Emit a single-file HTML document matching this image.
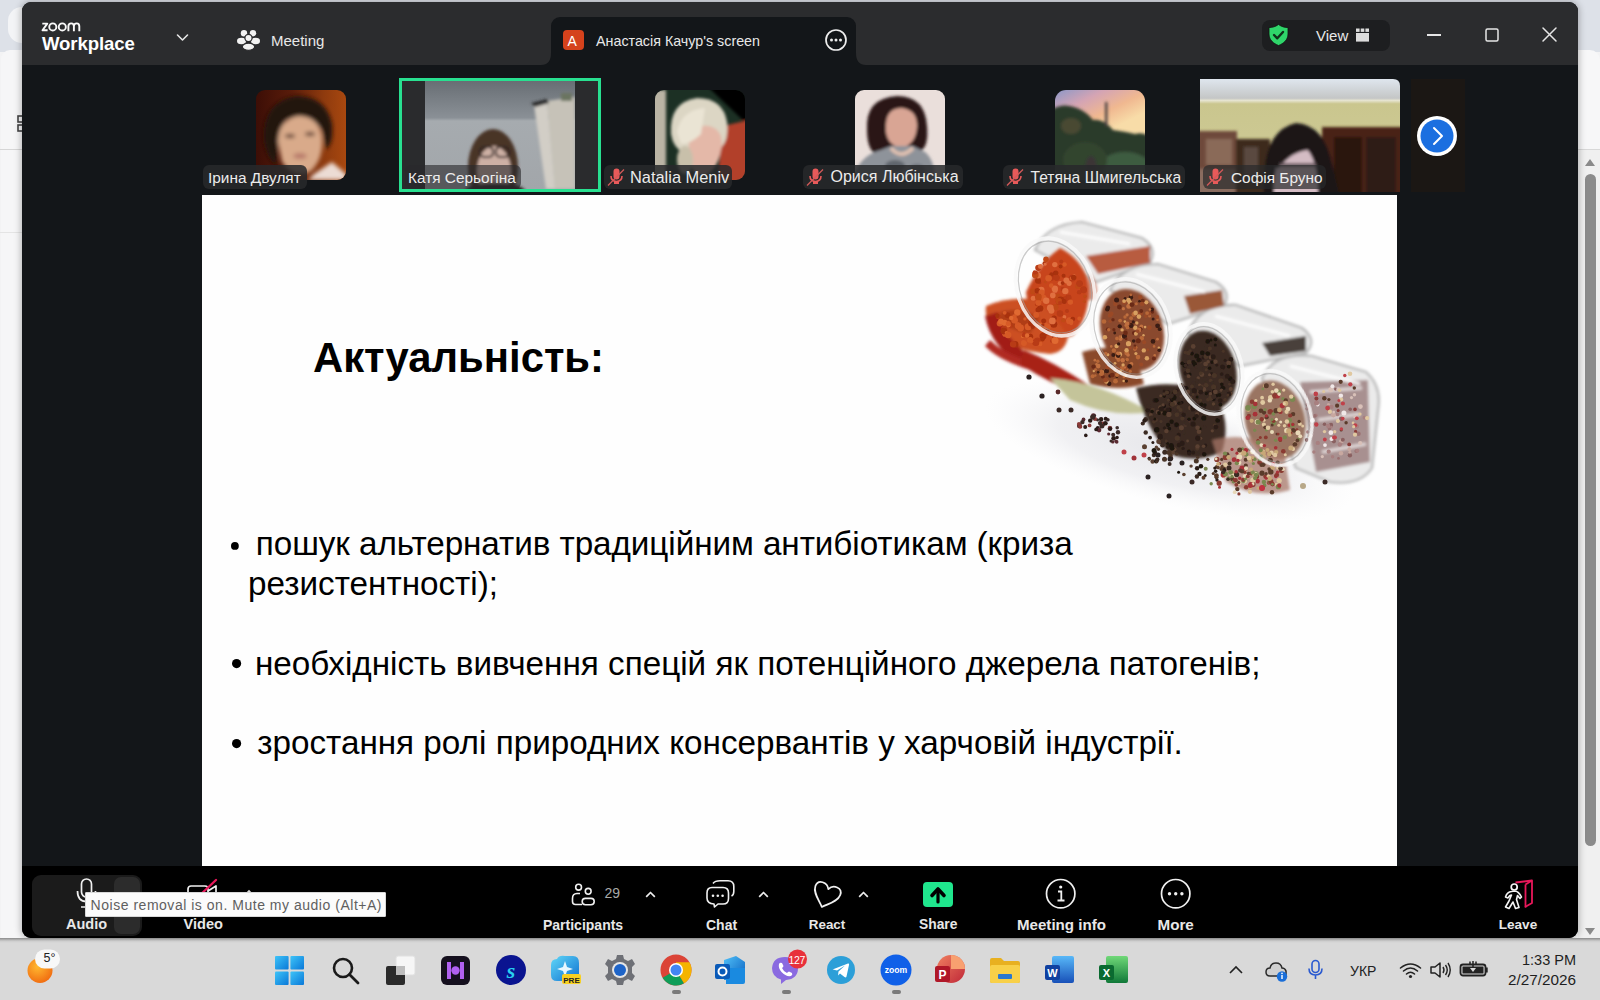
<!DOCTYPE html>
<html><head><meta charset="utf-8">
<style>
*{margin:0;padding:0;box-sizing:border-box}
html,body{width:1600px;height:1000px;overflow:hidden;background:#f3f3f4;font-family:"Liberation Sans",sans-serif}
.a{position:absolute}
.t{white-space:nowrap}
svg{overflow:visible}
</style></head><body>
<div class="a" style="left:0px;top:0px;width:1600px;height:52px;background:#dde1e8;border-radius:0px;"></div>
<div class="a" style="left:8px;top:7px;width:30px;height:36px;background:#f3f4f6;border-radius:14px;"></div>
<div class="a" style="left:1px;top:50px;width:40px;height:890px;background:#f6f6f7;border-radius:0px;border-radius:9px 10px 0 0"></div>
<div class="a" style="left:1560px;top:50px;width:40px;height:890px;background:#f7f7f8;border-radius:10px;"></div>
<div class="a" style="left:0px;top:149px;width:22px;height:1px;background:#d6d6d6;border-radius:0px;"></div>
<div class="a" style="left:0px;top:232px;width:22px;height:1px;background:#e4e4e4;border-radius:0px;"></div>
<div class="a" style="left:1578px;top:149px;width:22px;height:1px;background:#d8d8d8;border-radius:0px;"></div>
<div class="a" style="left:1578px;top:150px;width:22px;height:790px;background:#f0f0f0;border-radius:0px;"></div>
<svg class="a" style="left:15.5px;top:114px;" width="10" height="20" viewBox="0 0 10 20"><rect x="2" y="2" width="6" height="6" fill="none" stroke="#444" stroke-width="1.6"/><rect x="2" y="11" width="6" height="6" fill="none" stroke="#444" stroke-width="1.6"/></svg>
<svg class="a" style="left:1583px;top:156px;" width="14" height="12" viewBox="0 0 14 12"><path d="M2 10 L7 3 L12 10 Z" fill="#8a8a8a"/></svg>
<div class="a" style="left:1585px;top:174px;width:11px;height:672px;background:#8b8b8b;border-radius:6px;"></div>
<svg class="a" style="left:1583px;top:926px;" width="14" height="12" viewBox="0 0 14 12"><path d="M2 2 L7 9 L12 2 Z" fill="#8a8a8a"/></svg>
<div class="a" style="left:22px;top:2px;width:1556px;height:936px;background:#131619;border-radius:9px;box-shadow:0 0 7px 1px rgba(0,0,0,0.28)"></div>
<div class="a" style="left:22px;top:2px;width:1556px;height:63px;background:#2b2c2e;border-radius:0px;border-radius:9px 9px 0 0"></div>
<div class="a" style="left:22px;top:866px;width:1556px;height:72px;background:#000;border-radius:0px;border-radius:0 0 9px 9px"></div>
<svg class="a" style="left:40px;top:21px;" width="42" height="12" viewBox="0 0 42 12"><g fill="none" stroke="#fafafa" stroke-width="1.9" stroke-linejoin="round"><path d="M2.3 2.6 H7.3 L2.5 9.2 H7.6"/><circle cx="12.8" cy="5.9" r="3.55"/><circle cx="22.3" cy="5.9" r="3.55"/><path d="M28.4 10.2 V5.3 Q28.4 2.4 31.2 2.4 Q33.9 2.4 33.9 5.3 V10.2 M33.9 5.3 Q33.9 2.4 36.7 2.4 Q39.3 2.4 39.3 5.3 V10.2"/></g></svg>
<div class="a t" style="left:42px;top:35.26px;font-size:18.6px;line-height:18.6px;color:#fff;font-weight:700;font-family:'Liberation Sans',sans-serif;letter-spacing:-0.1px">Workplace</div>
<svg class="a" style="left:176px;top:33px;" width="13" height="9" viewBox="0 0 13 9"><path d="M1.5 2 L6.5 7 L11.5 2" fill="none" stroke="#e6e6e6" stroke-width="1.6" stroke-linecap="round" stroke-linejoin="round"/></svg>
<svg class="a" style="left:237px;top:29px;" width="23" height="22" viewBox="0 0 23 22"><circle cx="7" cy="4.2" r="3.2" fill="#f2f2f2"/><circle cx="16" cy="4.2" r="3.2" fill="#f2f2f2"/><ellipse cx="4.5" cy="12" rx="4.5" ry="3.2" fill="#f2f2f2"/><ellipse cx="18.5" cy="12" rx="4.5" ry="3.2" fill="#f2f2f2"/><circle cx="11.5" cy="9" r="3.6" stroke="#2b2b2d" stroke-width="1.2" fill="#f2f2f2"/><ellipse cx="11.5" cy="17.8" rx="6.2" ry="3.6" stroke="#2b2b2d" stroke-width="1.2" fill="#f2f2f2"/></svg>
<div class="a t" style="left:271px;top:33.30px;font-size:15px;line-height:15px;color:#e8e8e8;font-weight:400;font-family:'Liberation Sans',sans-serif;">Meeting</div>
<div class="a" style="left:551px;top:17px;width:305px;height:48px;background:#131619;border-radius:0px;border-radius:9px 9px 0 0"></div>
<svg class="a" style="left:541px;top:53px;" width="10" height="12" viewBox="0 0 10 12"><path d="M0 12 Q10 12 10 0 L10 12 Z" fill="#131619"/></svg>
<svg class="a" style="left:856px;top:53px;" width="10" height="12" viewBox="0 0 10 12"><path d="M10 12 Q0 12 0 0 L0 12 Z" fill="#131619"/></svg>
<div class="a" style="left:563px;top:30px;width:21px;height:20px;background:#d5421c;border-radius:4px;"></div>
<div class="a t" style="left:567.5px;top:33.65px;font-size:14px;line-height:14px;color:#fff;font-weight:400;font-family:'Liberation Sans',sans-serif;">A</div>
<div class="a t" style="left:596px;top:33.90px;font-size:14.3px;line-height:14.3px;color:#e8e8e8;font-weight:400;font-family:'Liberation Sans',sans-serif;">Анастасія Качур's screen</div>
<svg class="a" style="left:824px;top:28px;" width="24" height="24" viewBox="0 0 24 24"><circle cx="12" cy="12" r="10" fill="none" stroke="#eee" stroke-width="1.7"/><circle cx="7.5" cy="12" r="1.5" fill="#eee"/><circle cx="12" cy="12" r="1.5" fill="#eee"/><circle cx="16.5" cy="12" r="1.5" fill="#eee"/></svg>
<div class="a" style="left:1262px;top:20px;width:128px;height:31px;background:#1d1e20;border-radius:8px;"></div>
<svg class="a" style="left:1267px;top:23px;" width="23" height="24" viewBox="0 0 23 24"><path d="M11.5 1.5 C15 4 18 4.5 21 4.5 L21 11 C21 17 16.5 20.5 11.5 22.5 C6.5 20.5 2 17 2 11 L2 4.5 C5 4.5 8 4 11.5 1.5 Z" fill="#2fd56a" stroke="#111" stroke-width="0.8"/><path d="M7 12 L10.3 15.3 L16 9" fill="none" stroke="#10301a" stroke-width="2.4" stroke-linecap="round" stroke-linejoin="round"/></svg>
<div class="a t" style="left:1316px;top:28.30px;font-size:15px;line-height:15px;color:#e8e8e8;font-weight:400;font-family:'Liberation Sans',sans-serif;">View</div>
<svg class="a" style="left:1355px;top:27px;" width="15" height="16" viewBox="0 0 15 16"><rect x="1" y="1.5" width="3.6" height="3.4" fill="#dcdcdc"/><rect x="5.7" y="1.5" width="3.6" height="3.4" fill="#dcdcdc"/><rect x="10.4" y="1.5" width="3.6" height="3.4" fill="#dcdcdc"/><rect x="1" y="6" width="13" height="8.6" fill="#dcdcdc"/></svg>
<div class="a" style="left:1427px;top:34px;width:14px;height:1.6px;background:#e6e6e6;border-radius:0px;"></div>
<svg class="a" style="left:1484px;top:27px;" width="16" height="16" viewBox="0 0 16 16"><rect x="2" y="2" width="12" height="12" rx="1.5" fill="none" stroke="#e6e6e6" stroke-width="1.5"/></svg>
<svg class="a" style="left:1541px;top:26px;" width="17" height="17" viewBox="0 0 17 17"><path d="M2 2 L15 15 M15 2 L2 15" stroke="#e6e6e6" stroke-width="1.5" stroke-linecap="round"/></svg>
<svg class="a" style="left:256px;top:90px;" width="90" height="90" viewBox="0 0 90 90"><defs><clipPath id="c1"><rect width="90" height="90" rx="9"/></clipPath>
<linearGradient id="g1" x1="0" x2="1"><stop offset="0" stop-color="#3c0e06"/><stop offset="0.4" stop-color="#5a1c0a"/><stop offset="0.75" stop-color="#8e3a0e"/><stop offset="1" stop-color="#a8480f"/></linearGradient>
<filter id="bl2" x="-50%" y="-50%" width="200%" height="200%"><feGaussianBlur stdDeviation="2"/></filter></defs>
<g clip-path="url(#c1)"><rect width="90" height="90" fill="url(#g1)"/>
<g filter="url(#bl2)"><path d="M8 50 Q6 12 40 6 Q70 6 76 34 Q78 52 70 60 L66 40 Q50 22 30 30 Q22 44 20 76 Q10 66 8 50 Z" fill="#22140e"/>
<path d="M22 52 Q22 30 42 26 Q62 26 66 46 Q68 70 54 82 Q36 88 26 72 Z" fill="#d9aa8a"/>
<ellipse cx="34" cy="46" rx="5" ry="2.2" fill="#6a4a3a"/><ellipse cx="54" cy="44" rx="5" ry="2.2" fill="#6a4a3a"/>
<ellipse cx="44" cy="66" rx="7" ry="3" fill="#b87a6a"/>
<path d="M58 84 L76 72 L90 84 L90 90 L52 90 Z" fill="#ecdcd4"/></g></g></svg>
<div class="a" style="left:203px;top:165px;width:104px;height:24px;background:rgba(40,41,43,0.86);border-radius:6px;"></div>
<div class="a t" style="left:208px;top:169.76px;font-size:15.4px;line-height:15.4px;color:#ececec;font-weight:400;font-family:'Liberation Sans',sans-serif;">Ірина Двулят</div>
<div class="a" style="left:399px;top:78px;width:202px;height:114px;background:#28e090;border-radius:0px;"></div>
<div class="a" style="left:402px;top:81px;width:196px;height:108px;background:#2a2b2d;border-radius:0px;"></div>
<svg class="a" style="left:425px;top:81px;" width="150" height="108" viewBox="0 0 150 108"><defs><clipPath id="c2"><rect width="150" height="108"/></clipPath>
<linearGradient id="g2" x1="0" y1="0" x2="0" y2="1"><stop offset="0" stop-color="#686e74"/><stop offset="0.34" stop-color="#8a9096"/><stop offset="0.37" stop-color="#a6abaf"/><stop offset="1" stop-color="#a2a6aa"/></linearGradient>
<filter id="bl3" x="-50%" y="-50%" width="200%" height="200%"><feGaussianBlur stdDeviation="1.8"/></filter></defs>
<g clip-path="url(#c2)"><rect width="150" height="108" fill="url(#g2)"/>
<g filter="url(#bl3)"><path d="M122 20 L150 16 L150 108 L130 108 Z" fill="#c6c2b8"/>
<path d="M109 24 L122 20 L130 108 L121 108 Z" fill="#d2cec6"/>
<path d="M106 22 L122 18 L124 22 L110 26 Z" fill="#2a2c2c"/>
<rect x="136" y="12" width="11" height="8" fill="#6a7460"/>
<ellipse cx="68" cy="86" rx="25" ry="38" fill="#4a3428"/>
<ellipse cx="69" cy="90" rx="17" ry="25" fill="#cdb0a4"/>
<g fill="none" stroke="#2e2220" stroke-width="2"><rect x="55" y="66" width="13" height="10" rx="4"/><rect x="71" y="66" width="13" height="10" rx="4"/></g>
<ellipse cx="70" cy="110" rx="30" ry="8" fill="#2a2222"/></g></g></svg>
<div class="a" style="left:405px;top:165px;width:116px;height:24px;background:rgba(40,41,43,0.62);border-radius:6px;"></div>
<div class="a t" style="left:408px;top:169.76px;font-size:15.4px;line-height:15.4px;color:#ececec;font-weight:400;font-family:'Liberation Sans',sans-serif;">Катя Серьогіна</div>
<svg class="a" style="left:655px;top:90px;" width="90" height="90" viewBox="0 0 90 90"><defs><clipPath id="c3"><rect width="90" height="90" rx="9"/></clipPath><filter id="bl4" x="-50%" y="-50%" width="200%" height="200%"><feGaussianBlur stdDeviation="1.8"/></filter></defs>
<g clip-path="url(#c3)"><rect width="90" height="90" fill="#1c3024"/>
<g filter="url(#bl4)"><rect x="-4" y="0" width="15" height="90" fill="#bab4a4"/>
<path d="M52 -4 L94 -4 L94 36 Z" fill="#030303"/>
<path d="M68 36 L94 30 L94 94 L62 94 Z" fill="#b2402a"/>
<path d="M16 44 Q14 12 42 8 Q68 8 72 32 Q74 50 66 58 L30 64 Q18 58 16 44 Z" fill="#dcd6c4"/>
<path d="M34 52 Q38 34 54 36 Q70 40 66 60 Q62 82 48 86 Q34 84 34 64 Z" fill="#e4b8a8"/>
<path d="M22 42 Q26 20 50 18 L46 44 Q36 54 26 54 Z" fill="#eae4d4"/>
<ellipse cx="30" cy="70" rx="8" ry="14" fill="#c8c0aa"/></g></g></svg>
<div class="a" style="left:604px;top:165px;width:128px;height:24px;background:rgba(40,41,43,0.86);border-radius:6px;"></div>
<svg class="a" style="left:607px;top:168px;" width="18" height="18" viewBox="0 0 18 18"><path d="M6.5 3.5 a3 3 0 0 1 6 0 v5 a3 3 0 0 1 -6 0 Z" fill="#e85a5a"/><path d="M4 8 q0 5 5.5 5.5 q5.5 -0.5 5.5 -5.5" fill="none" stroke="#e85a5a" stroke-width="1.6"/><rect x="7" y="13" width="5" height="3" fill="#e85a5a"/><path d="M1 17.5 L17 1.5" stroke="#d45a5a" stroke-width="1.3"/></svg>
<div class="a t" style="left:630px;top:168.92px;font-size:16.4px;line-height:16.4px;color:#ececec;font-weight:400;font-family:'Liberation Sans',sans-serif;">Natalia Meniv</div>
<svg class="a" style="left:855px;top:90px;" width="90" height="90" viewBox="0 0 90 90"><defs><clipPath id="c4"><rect width="90" height="90" rx="9"/></clipPath><filter id="bl5" x="-50%" y="-50%" width="200%" height="200%"><feGaussianBlur stdDeviation="1.6"/></filter></defs>
<g clip-path="url(#c4)"><rect width="90" height="90" fill="#eadfdb"/>
<g filter="url(#bl5)"><path d="M12 40 Q10 8 42 6 Q70 6 72 36 Q74 58 64 62 L20 64 Q12 58 12 40 Z" fill="#2c1618"/>
<path d="M31 34 Q32 18 47 18 Q62 20 62 36 Q61 54 47 58 Q33 56 31 42 Z" fill="#d9a594"/>
<path d="M-2 92 Q2 66 26 60 L36 56 L58 56 L70 62 Q80 70 80 92 Z" fill="#8e939a"/>
<path d="M36 58 Q46 70 58 58" fill="none" stroke="#dfc0b0" stroke-width="4"/>
<ellipse cx="40" cy="76" rx="10" ry="6" fill="#60666e"/><ellipse cx="62" cy="80" rx="8" ry="6" fill="#6a7078"/></g></g></svg>
<div class="a" style="left:803px;top:165px;width:160px;height:24px;background:rgba(40,41,43,0.86);border-radius:6px;"></div>
<svg class="a" style="left:806px;top:168px;" width="18" height="18" viewBox="0 0 18 18"><path d="M6.5 3.5 a3 3 0 0 1 6 0 v5 a3 3 0 0 1 -6 0 Z" fill="#e85a5a"/><path d="M4 8 q0 5 5.5 5.5 q5.5 -0.5 5.5 -5.5" fill="none" stroke="#e85a5a" stroke-width="1.6"/><rect x="7" y="13" width="5" height="3" fill="#e85a5a"/><path d="M1 17.5 L17 1.5" stroke="#d45a5a" stroke-width="1.3"/></svg>
<div class="a t" style="left:830.5px;top:169.26px;font-size:16px;line-height:16px;color:#ececec;font-weight:400;font-family:'Liberation Sans',sans-serif;">Орися Любінська</div>
<svg class="a" style="left:1055px;top:90px;" width="90" height="90" viewBox="0 0 90 90"><defs><clipPath id="c5"><rect width="90" height="90" rx="11"/></clipPath>
<linearGradient id="g5" x1="0" y1="0" x2="0.5" y2="1"><stop offset="0" stop-color="#8c98c8"/><stop offset="0.22" stop-color="#d4a4b4"/><stop offset="0.42" stop-color="#f0b890"/><stop offset="0.6" stop-color="#f8dca8"/></linearGradient>
<filter id="bl6" x="-50%" y="-50%" width="200%" height="200%"><feGaussianBlur stdDeviation="1.8"/></filter></defs>
<g clip-path="url(#c5)"><rect width="90" height="90" fill="url(#g5)"/>
<g filter="url(#bl6)"><path d="M-4 20 Q8 12 22 18 Q32 22 38 30 Q48 28 58 40 Q72 42 80 44 Q88 42 94 46 L94 94 L-4 94 Z" fill="#2a3a2c"/>
<ellipse cx="16" cy="36" rx="10" ry="8" fill="#4a4a30"/>
<ellipse cx="70" cy="78" rx="26" ry="16" fill="#3c5c40"/>
<ellipse cx="30" cy="70" rx="22" ry="18" fill="#30442e"/>
<rect x="50" y="12" width="2.5" height="24" fill="#4a4040"/>
<ellipse cx="36" cy="80" rx="6" ry="14" fill="#3a3434"/></g></g></svg>
<div class="a" style="left:1003px;top:165px;width:182px;height:24px;background:rgba(40,41,43,0.86);border-radius:6px;"></div>
<svg class="a" style="left:1006px;top:168px;" width="18" height="18" viewBox="0 0 18 18"><path d="M6.5 3.5 a3 3 0 0 1 6 0 v5 a3 3 0 0 1 -6 0 Z" fill="#e85a5a"/><path d="M4 8 q0 5 5.5 5.5 q5.5 -0.5 5.5 -5.5" fill="none" stroke="#e85a5a" stroke-width="1.6"/><rect x="7" y="13" width="5" height="3" fill="#e85a5a"/><path d="M1 17.5 L17 1.5" stroke="#d45a5a" stroke-width="1.3"/></svg>
<div class="a t" style="left:1030.5px;top:169.55px;font-size:15.65px;line-height:15.65px;color:#ececec;font-weight:400;font-family:'Liberation Sans',sans-serif;">Тетяна Шмигельська</div>
<svg class="a" style="left:1200px;top:79px;" width="200" height="113" viewBox="0 0 200 113"><defs><clipPath id="c6"><path d="M0 0 H193 Q200 0 200 7 V113 H0 Z"/></clipPath>
<linearGradient id="g6" x1="0" y1="0" x2="0" y2="1"><stop offset="0" stop-color="#dfe6ee"/><stop offset="0.17" stop-color="#c4c6c6"/><stop offset="0.19" stop-color="#e6e4d0"/><stop offset="0.22" stop-color="#cac68e"/><stop offset="0.5" stop-color="#ccc892"/></linearGradient>
<filter id="bl7" x="-50%" y="-50%" width="200%" height="200%"><feGaussianBlur stdDeviation="1.8"/></filter></defs>
<g clip-path="url(#c6)"><rect width="200" height="113" fill="url(#g6)"/>
<g filter="url(#bl7)"><rect x="-5" y="52" width="42" height="66" fill="#6e4a3a"/>
<rect x="6" y="60" width="26" height="26" fill="#8a6a58"/>
<rect x="36" y="60" width="34" height="58" fill="#3e2a1e"/>
<rect x="44" y="68" width="14" height="30" fill="#5a4a40"/>
<rect x="122" y="48" width="83" height="70" fill="#4a2418"/>
<rect x="134" y="58" width="28" height="58" fill="#2a1810"/><rect x="166" y="58" width="30" height="58" fill="#2e1a12"/>
<rect x="-5" y="90" width="40" height="28" fill="#8a6c5e"/>
<path d="M64 118 Q60 52 96 44 Q124 46 132 84 L140 118 Z" fill="#1c1214"/>
<path d="M74 118 Q72 70 98 66 Q118 68 118 118 Z" fill="#d4bcc4"/>
<path d="M72 84 Q80 60 114 62 L122 72 Q96 66 78 90 Z" fill="#1c1214"/>
<rect x="80" y="84" width="36" height="4" fill="#6a5a60"/></g></g></svg>
<div class="a" style="left:1203px;top:165px;width:123px;height:24px;background:rgba(40,41,43,0.7);border-radius:6px;"></div>
<svg class="a" style="left:1206px;top:168px;" width="18" height="18" viewBox="0 0 18 18"><path d="M6.5 3.5 a3 3 0 0 1 6 0 v5 a3 3 0 0 1 -6 0 Z" fill="#e85a5a"/><path d="M4 8 q0 5 5.5 5.5 q5.5 -0.5 5.5 -5.5" fill="none" stroke="#e85a5a" stroke-width="1.6"/><rect x="7" y="13" width="5" height="3" fill="#e85a5a"/><path d="M1 17.5 L17 1.5" stroke="#d45a5a" stroke-width="1.3"/></svg>
<div class="a t" style="left:1231px;top:169.76px;font-size:15.4px;line-height:15.4px;color:#ececec;font-weight:400;font-family:'Liberation Sans',sans-serif;">Софія Бруно</div>
<div class="a" style="left:1411px;top:79px;width:54px;height:113px;background:#1b1714;border-radius:0px;"></div>
<svg class="a" style="left:1416px;top:115px;" width="42" height="42" viewBox="0 0 42 42"><circle cx="21" cy="21" r="20" fill="#fff"/><circle cx="21" cy="21" r="16.5" fill="#1b6fe0"/><path d="M18 13 L26 21 L18 29" fill="none" stroke="#fff" stroke-width="2" stroke-linecap="round" stroke-linejoin="round"/></svg>
<div class="a" style="left:202px;top:195px;width:1195px;height:671px;background:#fefefe;border-radius:0px;"></div>
<div class="a t" style="left:313px;top:337.42px;font-size:41.8px;line-height:41.8px;color:#000;font-weight:700;font-family:'Liberation Sans',sans-serif;">Актуальність:</div>
<svg class="a" style="left:230.79999999999998px;top:542.4px;" width="7.8" height="7.8" viewBox="0 0 7.8 7.8"><circle cx="3.9" cy="3.9" r="3.9" fill="#000"/></svg>
<div class="a t" style="left:255.8px;top:527.45px;font-size:33.25px;line-height:33.25px;color:#000;font-weight:400;font-family:'Liberation Sans',sans-serif;letter-spacing:-0.065px">пошук альтернатив традиційним антибіотикам (криза</div>
<div class="a t" style="left:248px;top:567.15px;font-size:33.25px;line-height:33.25px;color:#000;font-weight:400;font-family:'Liberation Sans',sans-serif;">резистентності);</div>
<svg class="a" style="left:232.0px;top:659.4px;" width="9.2" height="9.2" viewBox="0 0 9.2 9.2"><circle cx="4.6" cy="4.6" r="4.6" fill="#000"/></svg>
<div class="a t" style="left:255px;top:646.65px;font-size:33.25px;line-height:33.25px;color:#000;font-weight:400;font-family:'Liberation Sans',sans-serif;">необхідність вивчення спецій як потенційного джерела патогенів;</div>
<svg class="a" style="left:232.0px;top:739.3px;" width="9.2" height="9.2" viewBox="0 0 9.2 9.2"><circle cx="4.6" cy="4.6" r="4.6" fill="#000"/></svg>
<div class="a t" style="left:257.2px;top:726.25px;font-size:33.25px;line-height:33.25px;color:#000;font-weight:400;font-family:'Liberation Sans',sans-serif;">зростання ролі природних консервантів у харчовій індустрії.</div>
<svg class="a" style="left:975px;top:210px;" width="410" height="300" viewBox="975 210 410 300"><defs><filter id="sb1" x="-30%" y="-30%" width="160%" height="160%"><feGaussianBlur stdDeviation="3"/></filter>
<filter id="sb3" x="-30%" y="-30%" width="160%" height="160%"><feGaussianBlur stdDeviation="1.6"/></filter>
<filter id="sb2" x="-30%" y="-30%" width="160%" height="160%"><feGaussianBlur stdDeviation="0.6"/></filter></defs>
<defs><radialGradient id="shd"><stop offset="0" stop-color="#e4e4e8" stop-opacity="0.9"/><stop offset="0.6" stop-color="#e8e8ec" stop-opacity="0.6"/><stop offset="1" stop-color="#f4f4f6" stop-opacity="0"/></radialGradient></defs>
<ellipse cx="1170" cy="450" rx="190" ry="55" transform="rotate(14 1170 450)" fill="url(#shd)"/>
<g filter="url(#sb3)">
<!-- glass jar bodies -->
<g fill="#ebebeb" stroke="#b4b4b4" stroke-width="2.2">
<path d="M1035 250 Q1046 224 1082 222 L1142 238 Q1158 248 1150 263 L1096 282 Z"/>
<path d="M1110 290 Q1122 264 1158 264 L1216 282 Q1232 292 1224 306 L1168 324 Z"/>
<path d="M1188 334 Q1198 304 1236 305 L1302 328 Q1318 340 1306 353 L1240 366 Z"/>
<path d="M1262 378 Q1274 352 1312 356 L1366 372 Q1382 386 1378 410 L1372 468 Q1360 486 1330 482 L1296 468 Z"/>
</g>
<path d="M1086 256 L1150 246 L1150 263 L1098 274 Z" fill="#b85c40"/>
<path d="M1184 296 L1222 290 L1224 306 L1190 314 Z" fill="#9a5838"/>
<path d="M1262 343 L1306 336 L1306 351 L1270 356 Z" fill="#4a403a"/>
<path d="M1300 382 L1368 380 L1370 462 L1316 472 Z" fill="#a89090"/><path d="M1310 392 L1362 388 M1318 420 L1360 414 M1322 452 L1366 444" stroke="#f4f0f0" stroke-width="3" opacity="0.8"/>
<path d="M1090 272 Q1100 285 1096 300 L1082 300 Z" fill="#c06850" opacity="0.7"/>
<g fill="none" stroke="#ffffff" stroke-width="3" opacity="0.9">
<path d="M1060 232 L1130 244"/><path d="M1136 274 L1205 292"/><path d="M1215 316 L1290 336"/><path d="M1290 366 L1360 384"/>
</g>
</g>
<g filter="url(#sb3)">
<!-- paprika mound in jar 1 + spill -->
<path d="M1026 292 Q1040 262 1060 248 Q1080 258 1088 280 Q1092 316 1072 336 Q1046 338 1030 322 Z" fill="#c8441a"/>
<path d="M986 306 Q1010 296 1036 300 Q1056 316 1068 336 Q1066 352 1050 354 Q1020 352 996 338 Q984 322 986 306 Z" fill="#cc5020"/>
<path d="M1000 312 Q1020 306 1040 318 L1030 334 Q1010 330 1000 322 Z" fill="#b03c18"/>
<!-- chilis -->
<path d="M985 316 Q992 352 1030 368 L1036 360 Q1004 340 998 312 Z" fill="#a21e18"/>
<path d="M985 346 Q1000 362 1038 372 L1040 364 Q1006 356 990 340 Z" fill="#b02a22"/>
<path d="M1024 350 Q1054 362 1090 386 L1084 396 Q1050 384 1020 364 Z" fill="#a82218"/>
<!-- bay leaf -->
<path d="M1050 378 Q1100 382 1150 412 Q1110 418 1070 400 Z" fill="#c4c49a"/>
<!-- flakes -->
<ellipse cx="1132" cy="330" rx="31" ry="42" transform="rotate(-18 1132 330)" fill="#8a4a2e"/>
<path d="M1082 352 Q1110 344 1134 350 L1144 384 Q1120 392 1090 384 Z" fill="#8a4a2c"/>
<!-- black pepper -->
<ellipse cx="1208" cy="370" rx="28" ry="40" transform="rotate(-15 1208 370)" fill="#3a2a22"/>
<path d="M1136 388 Q1176 378 1214 394 Q1232 420 1222 452 Q1196 464 1170 454 Q1146 430 1136 388 Z" fill="#3a2a22"/>
<!-- mixed -->
<ellipse cx="1275" cy="420" rx="30" ry="40" transform="rotate(-15 1275 420)" fill="#9a7462"/>
<path d="M1212 440 Q1250 430 1284 452 L1290 490 Q1256 500 1226 482 Z" fill="#a87868" opacity="0.75"/>
</g>
<g filter="url(#sb2)">
<circle cx="1057.1" cy="296.9" r="3.3" fill="#c04818"/><circle cx="1064.4" cy="316.9" r="1.9" fill="#e07040"/><circle cx="1059.6" cy="300.1" r="1.9" fill="#c04818"/><circle cx="1038.3" cy="267.8" r="3.1" fill="#b83a16"/><circle cx="1060.1" cy="283.3" r="2.4" fill="#e07040"/><circle cx="1068.4" cy="297.7" r="3.2" fill="#b83a16"/><circle cx="1054.8" cy="288.6" r="3.2" fill="#e07040"/><circle cx="1039.9" cy="282.8" r="1.5" fill="#b83a16"/><circle cx="1050.5" cy="277.7" r="3.5" fill="#b83a16"/><circle cx="1063.6" cy="275.8" r="2.0" fill="#a83010"/><circle cx="1036.6" cy="304.6" r="1.7" fill="#b83a16"/><circle cx="1072.1" cy="278.2" r="3.4" fill="#b83a16"/><circle cx="1033.1" cy="291.5" r="2.9" fill="#c04818"/><circle cx="1040.3" cy="308.4" r="3.1" fill="#a83010"/><circle cx="1045.4" cy="282.1" r="1.5" fill="#c04818"/><circle cx="1061.2" cy="261.6" r="2.0" fill="#b83a16"/><circle cx="1033.2" cy="298.3" r="2.5" fill="#e07040"/><circle cx="1043.0" cy="298.1" r="3.5" fill="#d65a28"/><circle cx="1051.2" cy="285.6" r="2.3" fill="#d65a28"/><circle cx="1083.5" cy="289.8" r="3.5" fill="#b83a16"/><circle cx="1041.3" cy="290.0" r="3.2" fill="#e07040"/><circle cx="1038.0" cy="280.7" r="3.0" fill="#a83010"/><circle cx="1071.3" cy="278.4" r="1.6" fill="#d65a28"/><circle cx="1055.7" cy="273.1" r="2.7" fill="#a83010"/><circle cx="1054.8" cy="264.6" r="2.7" fill="#e07040"/><circle cx="1037.4" cy="290.8" r="2.8" fill="#a83010"/><circle cx="1038.1" cy="275.5" r="3.0" fill="#e07040"/><circle cx="1079.2" cy="292.2" r="2.3" fill="#b83a16"/><circle cx="1039.2" cy="299.8" r="2.0" fill="#c04818"/><circle cx="1054.1" cy="318.2" r="2.7" fill="#a83010"/><circle cx="1069.6" cy="320.7" r="3.5" fill="#d65a28"/><circle cx="1046.2" cy="300.8" r="3.2" fill="#e07040"/><circle cx="1084.4" cy="301.5" r="1.6" fill="#c04818"/><circle cx="1044.5" cy="263.2" r="1.9" fill="#a83010"/><circle cx="1071.2" cy="323.5" r="1.7" fill="#d65a28"/><circle cx="1070.4" cy="302.1" r="2.7" fill="#d65a28"/><circle cx="1072.8" cy="319.1" r="2.4" fill="#a83010"/><circle cx="1038.0" cy="309.7" r="2.5" fill="#a83010"/><circle cx="1038.4" cy="302.7" r="3.0" fill="#d65a28"/><circle cx="1055.3" cy="307.2" r="3.3" fill="#c04818"/><circle cx="1046.0" cy="259.2" r="2.8" fill="#c04818"/><circle cx="1064.7" cy="297.9" r="1.7" fill="#b83a16"/><circle cx="1066.4" cy="280.4" r="3.0" fill="#e07040"/><circle cx="1055.0" cy="290.2" r="2.6" fill="#e07040"/><circle cx="1062.5" cy="288.9" r="2.0" fill="#b83a16"/><circle cx="1060.7" cy="299.8" r="3.3" fill="#a83010"/><circle cx="1074.1" cy="276.0" r="1.8" fill="#e07040"/><circle cx="1035.3" cy="274.9" r="3.3" fill="#c04818"/><circle cx="1051.6" cy="274.5" r="2.3" fill="#a83010"/><circle cx="1041.6" cy="292.7" r="3.1" fill="#d65a28"/><circle cx="1073.7" cy="277.4" r="2.7" fill="#a83010"/><circle cx="1034.8" cy="272.4" r="2.2" fill="#b83a16"/><circle cx="1079.4" cy="318.7" r="2.1" fill="#d65a28"/><circle cx="1038.4" cy="296.9" r="3.4" fill="#c04818"/><circle cx="1052.8" cy="295.4" r="2.8" fill="#e07040"/><circle cx="1045.2" cy="264.1" r="1.6" fill="#e07040"/><circle cx="1056.7" cy="277.8" r="3.1" fill="#b83a16"/><circle cx="1062.6" cy="283.1" r="1.9" fill="#a83010"/><circle cx="1036.3" cy="272.4" r="1.6" fill="#b83a16"/><circle cx="1058.6" cy="301.7" r="2.8" fill="#a83010"/><circle cx="1084.9" cy="296.3" r="1.9" fill="#c04818"/><circle cx="1051.4" cy="310.8" r="3.0" fill="#e07040"/><circle cx="1060.6" cy="266.5" r="2.0" fill="#a83010"/><circle cx="1070.9" cy="321.5" r="2.5" fill="#d65a28"/><circle cx="1060.0" cy="313.6" r="3.3" fill="#b83a16"/><circle cx="1063.3" cy="320.2" r="2.3" fill="#c04818"/><circle cx="1058.8" cy="301.3" r="3.3" fill="#c04818"/><circle cx="1064.2" cy="301.4" r="2.5" fill="#a83010"/><circle cx="1060.0" cy="302.9" r="1.9" fill="#b83a16"/><circle cx="1053.8" cy="324.2" r="3.5" fill="#a83010"/><circle cx="1067.0" cy="311.0" r="2.1" fill="#b83a16"/><circle cx="1040.3" cy="266.5" r="2.4" fill="#e07040"/><circle cx="1048.6" cy="278.2" r="3.3" fill="#d65a28"/><circle cx="1064.6" cy="264.5" r="2.2" fill="#d65a28"/><circle cx="1078.0" cy="286.1" r="2.9" fill="#c04818"/><circle cx="1079.6" cy="283.6" r="3.4" fill="#b83a16"/><circle cx="1069.1" cy="283.3" r="2.6" fill="#e07040"/><circle cx="1065.3" cy="291.1" r="3.2" fill="#e07040"/><circle cx="1050.3" cy="307.9" r="3.4" fill="#e07040"/><circle cx="1052.4" cy="320.9" r="3.4" fill="#e07040"/><circle cx="1010.1" cy="325.9" r="2.3" fill="#b83a16"/><circle cx="1024.2" cy="333.7" r="1.6" fill="#b83a16"/><circle cx="1027.0" cy="326.8" r="3.1" fill="#b83a16"/><circle cx="1022.6" cy="336.5" r="1.6" fill="#e06a30"/><circle cx="1015.1" cy="344.4" r="3.3" fill="#a83010"/><circle cx="1008.4" cy="325.3" r="2.2" fill="#e06a30"/><circle cx="1030.3" cy="316.8" r="2.3" fill="#b83a16"/><circle cx="1007.4" cy="315.1" r="2.9" fill="#a83010"/><circle cx="1042.1" cy="325.0" r="2.5" fill="#e06a30"/><circle cx="1043.7" cy="320.9" r="2.5" fill="#a83010"/><circle cx="1037.4" cy="340.8" r="3.3" fill="#b83a16"/><circle cx="1017.6" cy="324.8" r="2.6" fill="#d65a28"/><circle cx="1024.1" cy="343.3" r="2.6" fill="#d65a28"/><circle cx="1023.7" cy="342.7" r="2.7" fill="#d65a28"/><circle cx="1005.2" cy="333.7" r="3.1" fill="#d65a28"/><circle cx="1014.6" cy="320.3" r="3.3" fill="#d65a28"/><circle cx="1046.1" cy="324.3" r="1.7" fill="#d65a28"/><circle cx="1018.2" cy="325.8" r="3.4" fill="#d65a28"/><circle cx="1004.1" cy="329.2" r="3.1" fill="#b83a16"/><circle cx="1003.7" cy="331.1" r="3.3" fill="#a83010"/><circle cx="999.7" cy="323.4" r="3.0" fill="#d65a28"/><circle cx="1045.1" cy="334.7" r="1.5" fill="#e06a30"/><circle cx="1004.7" cy="312.8" r="1.9" fill="#d65a28"/><circle cx="1055.0" cy="336.6" r="3.0" fill="#a83010"/><circle cx="1018.5" cy="325.5" r="2.2" fill="#d65a28"/><circle cx="1036.2" cy="314.9" r="2.9" fill="#d65a28"/><circle cx="1004.5" cy="322.8" r="3.0" fill="#e06a30"/><circle cx="1051.7" cy="341.1" r="1.7" fill="#b83a16"/><circle cx="1017.3" cy="312.5" r="3.2" fill="#e06a30"/><circle cx="1032.5" cy="320.5" r="2.7" fill="#a83010"/><circle cx="1047.3" cy="327.0" r="3.3" fill="#d65a28"/><circle cx="1046.5" cy="332.3" r="3.3" fill="#a83010"/><circle cx="1040.1" cy="343.9" r="2.3" fill="#d65a28"/><circle cx="998.3" cy="316.9" r="2.4" fill="#b83a16"/><circle cx="1014.4" cy="316.6" r="2.3" fill="#d65a28"/><circle cx="1028.2" cy="326.7" r="3.5" fill="#d65a28"/><circle cx="1035.8" cy="342.6" r="3.5" fill="#b83a16"/><circle cx="1008.3" cy="323.4" r="2.5" fill="#d65a28"/><circle cx="1011.2" cy="318.0" r="2.2" fill="#e06a30"/><circle cx="1055.0" cy="340.6" r="3.5" fill="#e06a30"/><circle cx="1029.0" cy="340.7" r="1.6" fill="#d65a28"/><circle cx="1013.1" cy="344.3" r="3.2" fill="#b83a16"/><circle cx="1020.4" cy="328.6" r="2.1" fill="#e06a30"/><circle cx="1032.7" cy="327.0" r="2.1" fill="#a83010"/><circle cx="1031.0" cy="323.5" r="2.9" fill="#a83010"/><circle cx="1029.4" cy="336.1" r="2.3" fill="#e06a30"/><circle cx="997.3" cy="315.7" r="2.3" fill="#a83010"/><circle cx="1020.6" cy="328.0" r="3.4" fill="#d65a28"/><circle cx="1006.3" cy="332.7" r="1.6" fill="#e06a30"/><circle cx="1024.9" cy="318.9" r="1.6" fill="#d65a28"/><circle cx="1000.9" cy="321.4" r="2.8" fill="#e06a30"/><circle cx="1030.3" cy="336.6" r="2.9" fill="#a83010"/><circle cx="1043.0" cy="336.0" r="3.5" fill="#a83010"/><circle cx="1042.8" cy="325.0" r="1.7" fill="#a83010"/><circle cx="1042.5" cy="339.3" r="2.2" fill="#a83010"/><circle cx="1030.1" cy="339.8" r="2.9" fill="#d65a28"/><circle cx="1031.4" cy="341.2" r="1.9" fill="#d65a28"/><circle cx="1023.7" cy="335.4" r="1.9" fill="#b83a16"/><circle cx="1008.1" cy="335.0" r="3.3" fill="#d65a28"/><circle cx="1027.1" cy="335.5" r="2.2" fill="#e06a30"/><circle cx="1120.1" cy="320.6" r="1.9" fill="#b86838"/><circle cx="1118.5" cy="359.8" r="2.1" fill="#b86838"/><circle cx="1134.9" cy="349.3" r="1.7" fill="#b86838"/><circle cx="1128.5" cy="343.7" r="2.6" fill="#d8a060"/><circle cx="1126.7" cy="353.0" r="2.4" fill="#b86838"/><circle cx="1124.9" cy="321.6" r="1.3" fill="#d8a060"/><circle cx="1135.2" cy="327.7" r="2.2" fill="#d8a060"/><circle cx="1131.4" cy="363.9" r="2.0" fill="#c07040"/><circle cx="1126.6" cy="350.2" r="2.2" fill="#d8a060"/><circle cx="1146.3" cy="302.3" r="2.1" fill="#d8a060"/><circle cx="1115.4" cy="304.0" r="2.2" fill="#9a4a28"/><circle cx="1146.9" cy="358.2" r="2.2" fill="#d8a060"/><circle cx="1135.9" cy="353.6" r="1.6" fill="#d8a060"/><circle cx="1145.1" cy="327.1" r="1.3" fill="#d8a060"/><circle cx="1143.8" cy="350.4" r="2.2" fill="#d8a060"/><circle cx="1149.4" cy="327.7" r="2.4" fill="#9a4a28"/><circle cx="1138.0" cy="357.1" r="2.3" fill="#b86838"/><circle cx="1133.9" cy="333.0" r="2.0" fill="#6a2a18"/><circle cx="1147.7" cy="349.9" r="1.3" fill="#9a4a28"/><circle cx="1122.4" cy="336.9" r="1.7" fill="#d8a060"/><circle cx="1154.7" cy="355.4" r="1.3" fill="#c07040"/><circle cx="1130.8" cy="297.4" r="2.3" fill="#3a1c12"/><circle cx="1111.2" cy="313.8" r="2.3" fill="#9a4a28"/><circle cx="1122.1" cy="329.9" r="1.7" fill="#d8a060"/><circle cx="1141.4" cy="326.4" r="2.0" fill="#c07040"/><circle cx="1111.3" cy="346.4" r="1.3" fill="#c07040"/><circle cx="1115.4" cy="301.7" r="1.9" fill="#9a4a28"/><circle cx="1140.3" cy="329.3" r="2.2" fill="#6a2a18"/><circle cx="1125.8" cy="325.5" r="1.4" fill="#c07040"/><circle cx="1116.6" cy="346.1" r="2.2" fill="#d8a060"/><circle cx="1113.9" cy="329.7" r="1.6" fill="#6a2a18"/><circle cx="1136.0" cy="347.6" r="1.6" fill="#b86838"/><circle cx="1139.5" cy="301.3" r="1.3" fill="#3a1c12"/><circle cx="1104.9" cy="337.3" r="2.3" fill="#d8a060"/><circle cx="1110.0" cy="315.4" r="2.2" fill="#9a4a28"/><circle cx="1131.1" cy="325.5" r="2.5" fill="#3a1c12"/><circle cx="1120.1" cy="355.0" r="1.6" fill="#9a4a28"/><circle cx="1157.6" cy="325.8" r="2.4" fill="#3a1c12"/><circle cx="1124.4" cy="336.3" r="2.5" fill="#3a1c12"/><circle cx="1149.6" cy="316.0" r="1.5" fill="#b86838"/><circle cx="1145.9" cy="316.1" r="1.9" fill="#9a4a28"/><circle cx="1154.1" cy="346.4" r="1.3" fill="#b86838"/><circle cx="1153.1" cy="319.0" r="1.5" fill="#3a1c12"/><circle cx="1129.6" cy="302.7" r="1.4" fill="#d8a060"/><circle cx="1140.2" cy="297.1" r="2.2" fill="#9a4a28"/><circle cx="1120.0" cy="336.7" r="1.4" fill="#b86838"/><circle cx="1158.9" cy="347.7" r="1.3" fill="#d8a060"/><circle cx="1139.0" cy="330.0" r="2.4" fill="#c07040"/><circle cx="1141.3" cy="364.4" r="2.0" fill="#9a4a28"/><circle cx="1128.1" cy="355.0" r="1.8" fill="#c07040"/><circle cx="1117.0" cy="338.4" r="1.9" fill="#b86838"/><circle cx="1119.6" cy="326.3" r="2.0" fill="#3a1c12"/><circle cx="1130.8" cy="294.9" r="1.3" fill="#b86838"/><circle cx="1107.7" cy="329.2" r="1.8" fill="#6a2a18"/><circle cx="1130.3" cy="347.8" r="1.5" fill="#9a4a28"/><circle cx="1117.2" cy="357.1" r="2.4" fill="#c07040"/><circle cx="1118.6" cy="343.9" r="1.6" fill="#3a1c12"/><circle cx="1125.1" cy="298.4" r="1.5" fill="#3a1c12"/><circle cx="1140.7" cy="313.2" r="2.5" fill="#9a4a28"/><circle cx="1133.7" cy="341.0" r="1.8" fill="#3a1c12"/><circle cx="1113.9" cy="350.5" r="2.2" fill="#b86838"/><circle cx="1134.9" cy="345.8" r="1.3" fill="#6a2a18"/><circle cx="1116.6" cy="300.0" r="2.5" fill="#3a1c12"/><circle cx="1107.3" cy="309.2" r="2.2" fill="#3a1c12"/><circle cx="1120.6" cy="326.5" r="1.2" fill="#3a1c12"/><circle cx="1133.8" cy="314.4" r="2.3" fill="#b86838"/><circle cx="1143.5" cy="335.2" r="1.2" fill="#d8a060"/><circle cx="1110.2" cy="321.2" r="1.8" fill="#9a4a28"/><circle cx="1125.5" cy="332.9" r="2.3" fill="#6a2a18"/><circle cx="1129.9" cy="302.7" r="2.3" fill="#d8a060"/><circle cx="1131.1" cy="318.2" r="1.9" fill="#b86838"/><circle cx="1128.8" cy="306.3" r="2.5" fill="#c07040"/><circle cx="1153.9" cy="358.6" r="2.0" fill="#6a2a18"/><circle cx="1131.7" cy="305.3" r="1.3" fill="#b86838"/><circle cx="1128.8" cy="324.3" r="1.7" fill="#6a2a18"/><circle cx="1152.3" cy="312.0" r="1.8" fill="#6a2a18"/><circle cx="1134.9" cy="347.9" r="1.5" fill="#9a4a28"/><circle cx="1135.9" cy="333.7" r="2.0" fill="#d8a060"/><circle cx="1119.6" cy="354.2" r="2.5" fill="#d8a060"/><circle cx="1128.5" cy="300.2" r="2.4" fill="#d8a060"/><circle cx="1138.9" cy="316.6" r="2.3" fill="#d8a060"/><circle cx="1142.7" cy="300.7" r="2.0" fill="#6a2a18"/><circle cx="1127.2" cy="323.7" r="2.3" fill="#c07040"/><circle cx="1118.2" cy="355.5" r="2.4" fill="#3a1c12"/><circle cx="1141.7" cy="338.3" r="2.3" fill="#b86838"/><circle cx="1114.7" cy="333.0" r="1.4" fill="#3a1c12"/><circle cx="1108.7" cy="329.8" r="1.7" fill="#b86838"/><circle cx="1120.6" cy="339.3" r="1.7" fill="#c07040"/><circle cx="1153.0" cy="341.4" r="2.3" fill="#3a1c12"/><circle cx="1159.7" cy="329.2" r="1.9" fill="#3a1c12"/><circle cx="1133.3" cy="321.9" r="1.6" fill="#3a1c12"/><circle cx="1159.2" cy="350.3" r="1.8" fill="#3a1c12"/><circle cx="1152.1" cy="309.5" r="1.9" fill="#3a1c12"/><circle cx="1150.0" cy="309.5" r="1.3" fill="#c07040"/><circle cx="1136.8" cy="323.0" r="1.7" fill="#d8a060"/><circle cx="1141.2" cy="311.0" r="2.0" fill="#6a2a18"/><circle cx="1126.2" cy="360.1" r="1.5" fill="#3a1c12"/><circle cx="1157.5" cy="319.7" r="1.3" fill="#b86838"/><circle cx="1138.3" cy="340.8" r="2.5" fill="#6a2a18"/><circle cx="1149.3" cy="313.6" r="2.0" fill="#9a4a28"/><circle cx="1142.1" cy="303.9" r="2.2" fill="#9a4a28"/><circle cx="1124.2" cy="302.2" r="2.4" fill="#9a4a28"/><circle cx="1113.0" cy="319.7" r="1.7" fill="#6a2a18"/><circle cx="1127.5" cy="327.4" r="1.9" fill="#b86838"/><circle cx="1126.1" cy="338.9" r="1.3" fill="#6a2a18"/><circle cx="1125.0" cy="317.0" r="1.7" fill="#b86838"/><circle cx="1123.4" cy="308.7" r="1.6" fill="#c07040"/><circle cx="1147.1" cy="313.1" r="1.9" fill="#b86838"/><circle cx="1144.2" cy="342.3" r="2.0" fill="#9a4a28"/><circle cx="1131.9" cy="304.7" r="2.4" fill="#6a2a18"/><circle cx="1135.6" cy="312.9" r="2.3" fill="#d8a060"/><circle cx="1157.5" cy="339.2" r="1.4" fill="#c07040"/><circle cx="1119.4" cy="307.0" r="2.4" fill="#6a2a18"/><circle cx="1136.3" cy="303.7" r="1.5" fill="#b86838"/><circle cx="1127.1" cy="314.8" r="1.6" fill="#c07040"/><circle cx="1124.1" cy="301.1" r="1.9" fill="#d8a060"/><circle cx="1108.0" cy="307.7" r="2.1" fill="#3a1c12"/><circle cx="1157.2" cy="316.9" r="1.9" fill="#9a4a28"/><circle cx="1137.7" cy="331.2" r="1.8" fill="#9a4a28"/><circle cx="1104.0" cy="321.5" r="2.3" fill="#b86838"/><circle cx="1095.3" cy="375.5" r="1.2" fill="#b86838"/><circle cx="1110.0" cy="376.0" r="1.7" fill="#3a1c12"/><circle cx="1126.4" cy="381.1" r="1.6" fill="#3a1c12"/><circle cx="1126.7" cy="368.5" r="1.9" fill="#c07040"/><circle cx="1121.6" cy="368.7" r="2.5" fill="#b86838"/><circle cx="1116.9" cy="376.7" r="1.4" fill="#3a1c12"/><circle cx="1098.2" cy="366.1" r="2.3" fill="#c07040"/><circle cx="1127.1" cy="359.6" r="1.9" fill="#b86838"/><circle cx="1130.3" cy="371.3" r="1.6" fill="#b86838"/><circle cx="1117.0" cy="374.9" r="2.0" fill="#b86838"/><circle cx="1102.9" cy="371.5" r="2.1" fill="#3a1c12"/><circle cx="1112.2" cy="375.1" r="2.4" fill="#6a2a18"/><circle cx="1115.6" cy="369.4" r="2.3" fill="#b86838"/><circle cx="1118.4" cy="353.7" r="1.8" fill="#c07040"/><circle cx="1102.3" cy="371.9" r="1.9" fill="#d8a060"/><circle cx="1125.8" cy="367.9" r="2.1" fill="#9a4a28"/><circle cx="1094.9" cy="360.2" r="1.4" fill="#c07040"/><circle cx="1120.3" cy="371.1" r="1.8" fill="#d8a060"/><circle cx="1107.4" cy="363.7" r="1.5" fill="#6a2a18"/><circle cx="1092.7" cy="376.2" r="2.0" fill="#b86838"/><circle cx="1093.5" cy="366.6" r="2.2" fill="#6a2a18"/><circle cx="1113.3" cy="354.9" r="2.0" fill="#3a1c12"/><circle cx="1108.1" cy="354.4" r="1.2" fill="#c07040"/><circle cx="1125.7" cy="375.5" r="1.5" fill="#d8a060"/><circle cx="1107.8" cy="354.8" r="1.5" fill="#d8a060"/><circle cx="1117.8" cy="353.3" r="1.8" fill="#c07040"/><circle cx="1115.5" cy="381.2" r="2.4" fill="#b86838"/><circle cx="1110.1" cy="364.6" r="2.4" fill="#3a1c12"/><circle cx="1105.7" cy="353.6" r="1.8" fill="#b86838"/><circle cx="1095.5" cy="369.6" r="1.4" fill="#b86838"/><circle cx="1106.8" cy="371.0" r="2.3" fill="#3a1c12"/><circle cx="1109.2" cy="383.8" r="2.2" fill="#3a1c12"/><circle cx="1096.6" cy="364.3" r="1.3" fill="#c07040"/><circle cx="1118.3" cy="368.6" r="2.2" fill="#9a4a28"/><circle cx="1106.4" cy="381.6" r="2.2" fill="#d8a060"/><circle cx="1123.9" cy="376.9" r="1.4" fill="#b86838"/><circle cx="1123.6" cy="381.0" r="1.2" fill="#d8a060"/><circle cx="1129.6" cy="366.4" r="2.4" fill="#3a1c12"/><circle cx="1102.9" cy="376.7" r="1.9" fill="#6a2a18"/><circle cx="1101.7" cy="371.5" r="1.9" fill="#b86838"/><circle cx="1093.8" cy="371.1" r="1.2" fill="#d8a060"/><circle cx="1107.4" cy="367.3" r="2.2" fill="#9a4a28"/><circle cx="1122.7" cy="360.3" r="2.2" fill="#c07040"/><circle cx="1105.6" cy="380.2" r="2.4" fill="#9a4a28"/><circle cx="1123.1" cy="365.0" r="1.7" fill="#d8a060"/><circle cx="1097.8" cy="361.3" r="1.7" fill="#b86838"/><circle cx="1124.8" cy="367.5" r="1.2" fill="#c07040"/><circle cx="1101.5" cy="373.5" r="2.5" fill="#b86838"/><circle cx="1115.0" cy="363.3" r="1.4" fill="#d8a060"/><circle cx="1098.2" cy="372.2" r="1.3" fill="#3a1c12"/><circle cx="1189.5" cy="374.4" r="2.0" fill="#1c1410"/><circle cx="1201.5" cy="387.3" r="1.7" fill="#5a4030"/><circle cx="1198.7" cy="393.0" r="1.8" fill="#4a3428"/><circle cx="1213.6" cy="387.1" r="2.5" fill="#4a3428"/><circle cx="1202.3" cy="352.9" r="2.4" fill="#1c1410"/><circle cx="1200.2" cy="361.7" r="1.5" fill="#5a4030"/><circle cx="1194.6" cy="364.2" r="2.4" fill="#1c1410"/><circle cx="1203.2" cy="357.9" r="1.7" fill="#2a1c18"/><circle cx="1182.2" cy="363.4" r="1.8" fill="#1c1410"/><circle cx="1199.7" cy="385.1" r="1.6" fill="#5a4030"/><circle cx="1199.4" cy="360.2" r="2.5" fill="#2a1c18"/><circle cx="1220.2" cy="400.6" r="2.3" fill="#2a1c18"/><circle cx="1212.1" cy="362.1" r="1.9" fill="#1c1410"/><circle cx="1186.5" cy="373.0" r="1.9" fill="#5a4030"/><circle cx="1204.7" cy="356.2" r="1.8" fill="#2a1c18"/><circle cx="1185.2" cy="352.5" r="1.7" fill="#4a3428"/><circle cx="1208.1" cy="361.8" r="1.7" fill="#5a4030"/><circle cx="1229.9" cy="384.4" r="1.5" fill="#3a2a22"/><circle cx="1230.2" cy="378.7" r="2.4" fill="#1c1410"/><circle cx="1208.0" cy="399.6" r="1.8" fill="#4a3428"/><circle cx="1221.0" cy="380.8" r="2.6" fill="#4a3428"/><circle cx="1193.9" cy="383.1" r="2.0" fill="#3a2a22"/><circle cx="1196.4" cy="366.6" r="1.8" fill="#3a2a22"/><circle cx="1210.7" cy="380.5" r="1.8" fill="#4a3428"/><circle cx="1232.7" cy="381.6" r="2.5" fill="#2a1c18"/><circle cx="1230.7" cy="393.5" r="1.8" fill="#5a4030"/><circle cx="1212.0" cy="382.7" r="1.4" fill="#3a2a22"/><circle cx="1214.0" cy="391.1" r="1.9" fill="#1c1410"/><circle cx="1205.1" cy="384.8" r="1.6" fill="#4a3428"/><circle cx="1230.8" cy="389.0" r="2.1" fill="#5a4030"/><circle cx="1207.7" cy="341.4" r="2.3" fill="#1c1410"/><circle cx="1215.4" cy="339.3" r="1.9" fill="#1c1410"/><circle cx="1189.0" cy="350.9" r="1.4" fill="#3a2a22"/><circle cx="1222.9" cy="388.3" r="2.5" fill="#1c1410"/><circle cx="1215.5" cy="361.8" r="2.2" fill="#5a4030"/><circle cx="1206.0" cy="384.3" r="1.6" fill="#4a3428"/><circle cx="1211.0" cy="340.0" r="1.5" fill="#1c1410"/><circle cx="1201.8" cy="374.6" r="2.4" fill="#5a4030"/><circle cx="1209.7" cy="368.2" r="1.8" fill="#1c1410"/><circle cx="1212.1" cy="397.2" r="2.2" fill="#4a3428"/><circle cx="1205.0" cy="379.8" r="2.3" fill="#3a2a22"/><circle cx="1206.4" cy="385.3" r="2.1" fill="#4a3428"/><circle cx="1211.6" cy="394.6" r="2.1" fill="#1c1410"/><circle cx="1225.1" cy="360.3" r="1.6" fill="#2a1c18"/><circle cx="1198.2" cy="377.9" r="1.7" fill="#5a4030"/><circle cx="1191.9" cy="353.5" r="2.0" fill="#1c1410"/><circle cx="1211.6" cy="373.5" r="1.6" fill="#2a1c18"/><circle cx="1223.3" cy="351.3" r="1.5" fill="#4a3428"/><circle cx="1193.2" cy="346.4" r="2.3" fill="#5a4030"/><circle cx="1205.6" cy="364.1" r="2.4" fill="#5a4030"/><circle cx="1205.3" cy="348.9" r="2.1" fill="#3a2a22"/><circle cx="1190.1" cy="350.9" r="1.7" fill="#4a3428"/><circle cx="1230.8" cy="359.5" r="2.4" fill="#2a1c18"/><circle cx="1184.8" cy="365.4" r="2.3" fill="#1c1410"/><circle cx="1186.2" cy="373.2" r="2.5" fill="#2a1c18"/><circle cx="1215.3" cy="391.8" r="2.4" fill="#5a4030"/><circle cx="1208.9" cy="393.0" r="2.4" fill="#2a1c18"/><circle cx="1228.7" cy="363.1" r="2.4" fill="#5a4030"/><circle cx="1203.8" cy="402.5" r="1.4" fill="#3a2a22"/><circle cx="1187.3" cy="362.0" r="2.3" fill="#3a2a22"/><circle cx="1221.5" cy="390.2" r="1.8" fill="#5a4030"/><circle cx="1196.7" cy="356.1" r="2.5" fill="#1c1410"/><circle cx="1208.0" cy="352.0" r="1.7" fill="#4a3428"/><circle cx="1198.7" cy="391.1" r="2.1" fill="#4a3428"/><circle cx="1187.9" cy="363.9" r="1.9" fill="#2a1c18"/><circle cx="1194.6" cy="339.3" r="1.5" fill="#3a2a22"/><circle cx="1229.4" cy="384.3" r="1.4" fill="#4a3428"/><circle cx="1204.2" cy="390.5" r="1.5" fill="#1c1410"/><circle cx="1213.5" cy="404.0" r="1.7" fill="#5a4030"/><circle cx="1229.0" cy="394.1" r="2.4" fill="#2a1c18"/><circle cx="1225.1" cy="399.7" r="1.8" fill="#4a3428"/><circle cx="1221.9" cy="368.2" r="1.4" fill="#5a4030"/><circle cx="1210.6" cy="357.4" r="1.9" fill="#5a4030"/><circle cx="1209.5" cy="374.8" r="1.5" fill="#5a4030"/><circle cx="1204.3" cy="368.5" r="2.4" fill="#3a2a22"/><circle cx="1196.9" cy="380.7" r="2.1" fill="#3a2a22"/><circle cx="1228.8" cy="366.6" r="1.9" fill="#1c1410"/><circle cx="1214.3" cy="375.6" r="2.5" fill="#4a3428"/><circle cx="1206.5" cy="357.2" r="1.7" fill="#3a2a22"/><circle cx="1203.5" cy="389.3" r="2.6" fill="#5a4030"/><circle cx="1227.8" cy="395.1" r="1.5" fill="#4a3428"/><circle cx="1227.3" cy="376.3" r="2.5" fill="#2a1c18"/><circle cx="1222.6" cy="367.0" r="2.6" fill="#2a1c18"/><circle cx="1200.7" cy="373.3" r="1.8" fill="#4a3428"/><circle cx="1216.8" cy="395.7" r="1.6" fill="#1c1410"/><circle cx="1187.9" cy="370.8" r="2.3" fill="#4a3428"/><circle cx="1187.3" cy="375.3" r="1.5" fill="#3a2a22"/><circle cx="1189.3" cy="362.3" r="2.5" fill="#4a3428"/><circle cx="1190.5" cy="366.2" r="2.4" fill="#3a2a22"/><circle cx="1206.1" cy="369.7" r="1.5" fill="#4a3428"/><circle cx="1206.0" cy="356.5" r="2.5" fill="#4a3428"/><circle cx="1220.4" cy="404.6" r="1.9" fill="#1c1410"/><circle cx="1224.3" cy="392.0" r="2.5" fill="#3a2a22"/><circle cx="1188.4" cy="353.0" r="2.3" fill="#4a3428"/><circle cx="1216.7" cy="365.1" r="1.6" fill="#2a1c18"/><circle cx="1193.4" cy="362.0" r="2.1" fill="#1c1410"/><circle cx="1221.8" cy="384.4" r="1.8" fill="#1c1410"/><circle cx="1215.3" cy="345.1" r="1.5" fill="#1c1410"/><circle cx="1210.5" cy="393.9" r="1.9" fill="#5a4030"/><circle cx="1188.7" cy="376.2" r="1.9" fill="#5a4030"/><circle cx="1207.7" cy="353.6" r="2.4" fill="#1c1410"/><circle cx="1209.9" cy="348.5" r="2.0" fill="#4a3428"/><circle cx="1221.7" cy="374.1" r="1.9" fill="#2a1c18"/><circle cx="1198.4" cy="359.8" r="2.1" fill="#1c1410"/><circle cx="1201.7" cy="386.6" r="2.2" fill="#4a3428"/><circle cx="1219.5" cy="395.0" r="1.9" fill="#1c1410"/><circle cx="1206.5" cy="395.0" r="2.4" fill="#3a2a22"/><circle cx="1191.9" cy="386.4" r="1.9" fill="#4a3428"/><circle cx="1185.5" cy="365.6" r="1.8" fill="#3a2a22"/><circle cx="1213.2" cy="356.7" r="2.5" fill="#2a1c18"/><circle cx="1186.6" cy="393.4" r="1.5" fill="#4a3428"/><circle cx="1175.1" cy="409.2" r="2.3" fill="#3a2a22"/><circle cx="1170.7" cy="404.6" r="2.1" fill="#2a1c18"/><circle cx="1176.9" cy="414.7" r="2.3" fill="#4a3428"/><circle cx="1185.3" cy="424.9" r="2.0" fill="#4a3428"/><circle cx="1173.8" cy="393.8" r="2.4" fill="#2a1c18"/><circle cx="1160.4" cy="438.6" r="2.2" fill="#1c1410"/><circle cx="1205.2" cy="445.6" r="2.0" fill="#2a1c18"/><circle cx="1169.0" cy="399.8" r="1.9" fill="#1c1410"/><circle cx="1142.8" cy="423.5" r="2.1" fill="#3a2a22"/><circle cx="1176.8" cy="390.6" r="1.7" fill="#2a1c18"/><circle cx="1178.3" cy="407.5" r="1.9" fill="#4a3428"/><circle cx="1161.0" cy="421.4" r="1.5" fill="#4a3428"/><circle cx="1181.0" cy="396.5" r="1.5" fill="#4a3428"/><circle cx="1200.3" cy="388.4" r="2.7" fill="#3a2a22"/><circle cx="1160.2" cy="436.5" r="2.7" fill="#2a1c18"/><circle cx="1164.1" cy="391.1" r="1.6" fill="#2a1c18"/><circle cx="1204.6" cy="427.2" r="1.6" fill="#3a2a22"/><circle cx="1188.7" cy="410.7" r="2.0" fill="#3a2a22"/><circle cx="1200.8" cy="438.3" r="1.5" fill="#5a4030"/><circle cx="1160.3" cy="407.3" r="2.1" fill="#5a4030"/><circle cx="1168.9" cy="424.0" r="2.3" fill="#3a2a22"/><circle cx="1217.1" cy="412.1" r="2.1" fill="#2a1c18"/><circle cx="1169.4" cy="410.1" r="2.4" fill="#1c1410"/><circle cx="1201.2" cy="404.6" r="2.2" fill="#1c1410"/><circle cx="1167.8" cy="392.6" r="2.5" fill="#2a1c18"/><circle cx="1153.9" cy="421.7" r="1.8" fill="#4a3428"/><circle cx="1200.1" cy="428.8" r="1.4" fill="#1c1410"/><circle cx="1174.5" cy="403.2" r="2.4" fill="#5a4030"/><circle cx="1196.6" cy="405.5" r="2.2" fill="#2a1c18"/><circle cx="1213.5" cy="398.8" r="2.2" fill="#1c1410"/><circle cx="1200.8" cy="392.2" r="2.4" fill="#2a1c18"/><circle cx="1168.0" cy="424.9" r="2.1" fill="#1c1410"/><circle cx="1158.0" cy="412.1" r="2.4" fill="#5a4030"/><circle cx="1190.1" cy="407.9" r="1.5" fill="#3a2a22"/><circle cx="1185.9" cy="388.6" r="2.7" fill="#1c1410"/><circle cx="1164.8" cy="413.0" r="2.5" fill="#1c1410"/><circle cx="1182.4" cy="387.8" r="2.4" fill="#2a1c18"/><circle cx="1164.4" cy="396.3" r="1.6" fill="#1c1410"/><circle cx="1181.3" cy="385.7" r="2.6" fill="#4a3428"/><circle cx="1197.9" cy="408.3" r="2.3" fill="#2a1c18"/><circle cx="1187.6" cy="391.9" r="2.4" fill="#5a4030"/><circle cx="1203.4" cy="408.2" r="2.6" fill="#2a1c18"/><circle cx="1178.9" cy="445.1" r="2.3" fill="#2a1c18"/><circle cx="1178.7" cy="435.0" r="2.2" fill="#2a1c18"/><circle cx="1176.4" cy="424.7" r="2.5" fill="#2a1c18"/><circle cx="1150.8" cy="415.0" r="1.9" fill="#5a4030"/><circle cx="1197.1" cy="414.1" r="2.0" fill="#5a4030"/><circle cx="1182.4" cy="418.5" r="2.1" fill="#4a3428"/><circle cx="1198.4" cy="401.3" r="1.4" fill="#4a3428"/><circle cx="1190.5" cy="408.0" r="2.4" fill="#5a4030"/><circle cx="1180.5" cy="427.0" r="2.0" fill="#3a2a22"/><circle cx="1160.3" cy="442.7" r="1.9" fill="#2a1c18"/><circle cx="1190.6" cy="397.6" r="1.7" fill="#5a4030"/><circle cx="1182.0" cy="402.4" r="1.5" fill="#1c1410"/><circle cx="1177.8" cy="437.2" r="2.0" fill="#3a2a22"/><circle cx="1176.2" cy="424.3" r="1.9" fill="#2a1c18"/><circle cx="1167.7" cy="443.5" r="1.5" fill="#1c1410"/><circle cx="1173.9" cy="397.6" r="2.7" fill="#1c1410"/><circle cx="1188.3" cy="421.4" r="1.8" fill="#4a3428"/><circle cx="1188.9" cy="451.5" r="1.9" fill="#1c1410"/><circle cx="1158.4" cy="449.2" r="1.7" fill="#4a3428"/><circle cx="1214.7" cy="425.3" r="1.8" fill="#4a3428"/><circle cx="1203.8" cy="418.0" r="2.6" fill="#1c1410"/><circle cx="1193.1" cy="406.1" r="2.6" fill="#1c1410"/><circle cx="1197.8" cy="438.2" r="2.7" fill="#2a1c18"/><circle cx="1179.1" cy="403.2" r="1.8" fill="#1c1410"/><circle cx="1181.0" cy="403.2" r="1.5" fill="#2a1c18"/><circle cx="1160.7" cy="411.7" r="2.1" fill="#5a4030"/><circle cx="1164.8" cy="452.3" r="2.5" fill="#3a2a22"/><circle cx="1162.5" cy="445.2" r="2.3" fill="#3a2a22"/><circle cx="1197.1" cy="397.1" r="1.5" fill="#1c1410"/><circle cx="1194.4" cy="418.6" r="2.0" fill="#1c1410"/><circle cx="1163.8" cy="406.1" r="2.2" fill="#1c1410"/><circle cx="1183.4" cy="408.5" r="1.7" fill="#3a2a22"/><circle cx="1183.9" cy="388.3" r="2.6" fill="#2a1c18"/><circle cx="1156.0" cy="419.9" r="1.9" fill="#4a3428"/><circle cx="1152.9" cy="442.6" r="1.5" fill="#2a1c18"/><circle cx="1167.2" cy="399.6" r="2.6" fill="#3a2a22"/><circle cx="1183.7" cy="414.8" r="2.3" fill="#2a1c18"/><circle cx="1180.6" cy="410.0" r="2.0" fill="#4a3428"/><circle cx="1147.8" cy="410.2" r="2.3" fill="#2a1c18"/><circle cx="1197.3" cy="448.6" r="2.1" fill="#4a3428"/><circle cx="1206.4" cy="393.5" r="1.7" fill="#1c1410"/><circle cx="1145.7" cy="432.5" r="2.2" fill="#3a2a22"/><circle cx="1193.1" cy="424.1" r="2.6" fill="#2a1c18"/><circle cx="1194.3" cy="390.7" r="2.6" fill="#2a1c18"/><circle cx="1196.6" cy="416.1" r="2.2" fill="#2a1c18"/><circle cx="1204.9" cy="405.0" r="1.8" fill="#1c1410"/><circle cx="1183.1" cy="448.4" r="1.7" fill="#2a1c18"/><circle cx="1189.0" cy="419.3" r="1.8" fill="#1c1410"/><circle cx="1172.4" cy="404.3" r="2.5" fill="#4a3428"/><circle cx="1152.8" cy="409.7" r="2.0" fill="#4a3428"/><circle cx="1199.4" cy="401.6" r="1.7" fill="#3a2a22"/><circle cx="1164.5" cy="428.0" r="1.7" fill="#2a1c18"/><circle cx="1152.1" cy="411.5" r="1.8" fill="#1c1410"/><circle cx="1193.1" cy="394.6" r="1.4" fill="#4a3428"/><circle cx="1175.2" cy="392.0" r="2.4" fill="#4a3428"/><circle cx="1167.0" cy="392.5" r="2.1" fill="#4a3428"/><circle cx="1168.9" cy="414.4" r="2.6" fill="#5a4030"/><circle cx="1188.6" cy="398.2" r="2.7" fill="#4a3428"/><circle cx="1168.0" cy="409.7" r="2.2" fill="#2a1c18"/><circle cx="1187.6" cy="441.0" r="1.4" fill="#5a4030"/><circle cx="1168.4" cy="400.2" r="1.5" fill="#4a3428"/><circle cx="1210.8" cy="398.1" r="2.6" fill="#4a3428"/><circle cx="1200.6" cy="400.2" r="1.5" fill="#4a3428"/><circle cx="1158.8" cy="441.4" r="2.5" fill="#5a4030"/><circle cx="1177.3" cy="438.1" r="2.6" fill="#4a3428"/><circle cx="1154.8" cy="418.9" r="1.5" fill="#1c1410"/><circle cx="1170.5" cy="430.2" r="1.8" fill="#3a2a22"/><circle cx="1186.6" cy="423.2" r="2.4" fill="#3a2a22"/><circle cx="1154.6" cy="400.5" r="2.2" fill="#2a1c18"/><circle cx="1145.7" cy="419.4" r="2.4" fill="#3a2a22"/><circle cx="1183.2" cy="391.0" r="2.0" fill="#3a2a22"/><circle cx="1181.4" cy="427.7" r="2.5" fill="#5a4030"/><circle cx="1183.8" cy="432.3" r="2.0" fill="#3a2a22"/><circle cx="1164.1" cy="394.1" r="1.6" fill="#4a3428"/><circle cx="1182.1" cy="443.3" r="2.6" fill="#2a1c18"/><circle cx="1167.9" cy="446.8" r="2.0" fill="#2a1c18"/><circle cx="1172.0" cy="400.7" r="1.4" fill="#1c1410"/><circle cx="1213.7" cy="396.6" r="2.5" fill="#3a2a22"/><circle cx="1171.6" cy="421.8" r="2.2" fill="#1c1410"/><circle cx="1148.6" cy="406.4" r="2.2" fill="#3a2a22"/><circle cx="1176.7" cy="424.8" r="2.0" fill="#1c1410"/><circle cx="1215.6" cy="407.2" r="2.3" fill="#3a2a22"/><circle cx="1156.8" cy="429.8" r="2.7" fill="#1c1410"/><circle cx="1169.3" cy="428.6" r="1.9" fill="#1c1410"/><circle cx="1156.4" cy="400.2" r="2.3" fill="#1c1410"/><circle cx="1171.4" cy="395.8" r="2.4" fill="#3a2a22"/><circle cx="1197.6" cy="427.7" r="2.3" fill="#5a4030"/><circle cx="1166.4" cy="431.1" r="2.2" fill="#5a4030"/><circle cx="1144.5" cy="420.6" r="2.2" fill="#2a1c18"/><circle cx="1203.6" cy="446.2" r="1.8" fill="#5a4030"/><circle cx="1150.1" cy="437.6" r="1.9" fill="#2a1c18"/><circle cx="1172.9" cy="452.5" r="2.1" fill="#5a4030"/><circle cx="1160.7" cy="395.8" r="1.5" fill="#5a4030"/><circle cx="1151.5" cy="417.8" r="2.3" fill="#3a2a22"/><circle cx="1163.1" cy="404.9" r="1.7" fill="#5a4030"/><circle cx="1217.7" cy="420.4" r="2.4" fill="#1c1410"/><circle cx="1212.3" cy="430.8" r="1.6" fill="#5a4030"/><circle cx="1161.3" cy="409.0" r="2.6" fill="#2a1c18"/><circle cx="1220.0" cy="417.6" r="2.0" fill="#3a2a22"/><circle cx="1192.9" cy="408.8" r="2.6" fill="#2a1c18"/><circle cx="1159.0" cy="413.0" r="1.9" fill="#1c1410"/><circle cx="1162.9" cy="441.0" r="2.4" fill="#3a2a22"/><circle cx="1199.0" cy="431.8" r="2.3" fill="#5a4030"/><circle cx="1215.9" cy="427.1" r="2.4" fill="#2a1c18"/><circle cx="1197.5" cy="446.4" r="2.2" fill="#5a4030"/><circle cx="1166.2" cy="441.0" r="1.5" fill="#4a3428"/><circle cx="1193.1" cy="450.6" r="1.7" fill="#3a2a22"/><circle cx="1293.1" cy="430.1" r="2.1" fill="#5a3a2a"/><circle cx="1276.9" cy="434.1" r="1.4" fill="#5a3a2a"/><circle cx="1293.2" cy="449.0" r="1.9" fill="#e0c8a0"/><circle cx="1292.5" cy="399.3" r="2.7" fill="#7a8850"/><circle cx="1264.0" cy="420.2" r="1.5" fill="#e0c8a0"/><circle cx="1263.9" cy="424.7" r="2.1" fill="#e0c8a0"/><circle cx="1257.9" cy="440.3" r="1.5" fill="#8a3a30"/><circle cx="1283.0" cy="398.7" r="1.7" fill="#7a8850"/><circle cx="1266.7" cy="417.2" r="2.0" fill="#5a3a2a"/><circle cx="1248.9" cy="415.9" r="2.1" fill="#8a3a30"/><circle cx="1280.6" cy="411.9" r="2.0" fill="#a83038"/><circle cx="1251.7" cy="420.8" r="2.1" fill="#c8a878"/><circle cx="1289.7" cy="420.3" r="2.3" fill="#7a8850"/><circle cx="1291.2" cy="396.6" r="2.2" fill="#e0c8a0"/><circle cx="1270.5" cy="397.4" r="2.5" fill="#e0c8a0"/><circle cx="1275.0" cy="395.8" r="2.8" fill="#8a3a30"/><circle cx="1290.8" cy="433.1" r="1.8" fill="#8a3a30"/><circle cx="1254.3" cy="406.6" r="2.7" fill="#7a8850"/><circle cx="1248.2" cy="409.5" r="2.4" fill="#c8a878"/><circle cx="1280.4" cy="440.4" r="1.7" fill="#8a3a30"/><circle cx="1286.3" cy="430.9" r="2.3" fill="#e0c8a0"/><circle cx="1254.7" cy="430.3" r="1.7" fill="#7a8850"/><circle cx="1264.4" cy="385.8" r="1.5" fill="#c8a878"/><circle cx="1289.3" cy="425.3" r="1.7" fill="#a83038"/><circle cx="1293.1" cy="414.1" r="2.2" fill="#5a3a2a"/><circle cx="1299.9" cy="423.9" r="1.9" fill="#e0c8a0"/><circle cx="1267.4" cy="450.0" r="2.1" fill="#c8a878"/><circle cx="1294.6" cy="443.1" r="1.7" fill="#e0c8a0"/><circle cx="1294.2" cy="430.8" r="2.0" fill="#5a3a2a"/><circle cx="1277.8" cy="396.6" r="2.0" fill="#a83038"/><circle cx="1279.8" cy="411.9" r="1.8" fill="#8a3a30"/><circle cx="1258.1" cy="442.5" r="2.3" fill="#7a8850"/><circle cx="1270.3" cy="411.8" r="2.7" fill="#8a3a30"/><circle cx="1288.0" cy="409.0" r="2.3" fill="#e8d8b8"/><circle cx="1255.6" cy="404.4" r="2.2" fill="#7a8850"/><circle cx="1286.4" cy="429.9" r="2.0" fill="#e8d8b8"/><circle cx="1266.4" cy="430.0" r="1.5" fill="#7a8850"/><circle cx="1275.7" cy="440.2" r="1.8" fill="#7a8850"/><circle cx="1275.7" cy="447.7" r="1.8" fill="#a83038"/><circle cx="1286.6" cy="411.8" r="2.1" fill="#e0c8a0"/><circle cx="1298.2" cy="439.6" r="1.9" fill="#7a8850"/><circle cx="1264.0" cy="412.6" r="2.1" fill="#5a3a2a"/><circle cx="1286.9" cy="421.5" r="2.2" fill="#e0c8a0"/><circle cx="1261.4" cy="445.1" r="1.9" fill="#e8d8b8"/><circle cx="1266.3" cy="385.7" r="2.5" fill="#5a3a2a"/><circle cx="1276.4" cy="419.3" r="1.6" fill="#e8d8b8"/><circle cx="1290.2" cy="415.5" r="2.1" fill="#8a3a30"/><circle cx="1302.7" cy="426.1" r="1.5" fill="#e0c8a0"/><circle cx="1273.5" cy="422.7" r="2.8" fill="#7a8850"/><circle cx="1262.9" cy="388.9" r="1.4" fill="#7a8850"/><circle cx="1288.7" cy="430.9" r="2.6" fill="#c8a878"/><circle cx="1278.9" cy="391.9" r="2.2" fill="#7a8850"/><circle cx="1247.8" cy="417.7" r="2.3" fill="#a83038"/><circle cx="1292.5" cy="425.0" r="2.6" fill="#7a8850"/><circle cx="1255.8" cy="400.5" r="1.6" fill="#e0c8a0"/><circle cx="1273.1" cy="384.3" r="1.7" fill="#e0c8a0"/><circle cx="1278.2" cy="434.1" r="1.4" fill="#8a3a30"/><circle cx="1260.9" cy="410.8" r="2.3" fill="#5a3a2a"/><circle cx="1282.3" cy="405.6" r="2.6" fill="#a83038"/><circle cx="1296.9" cy="429.6" r="1.4" fill="#8a3a30"/><circle cx="1285.8" cy="400.3" r="2.1" fill="#5a3a2a"/><circle cx="1255.3" cy="404.0" r="2.3" fill="#a83038"/><circle cx="1290.8" cy="448.1" r="2.5" fill="#c8a878"/><circle cx="1252.0" cy="401.8" r="2.2" fill="#8a3a30"/><circle cx="1255.1" cy="414.2" r="2.4" fill="#a83038"/><circle cx="1285.6" cy="403.3" r="2.6" fill="#c8a878"/><circle cx="1262.7" cy="402.5" r="2.4" fill="#e0c8a0"/><circle cx="1298.0" cy="432.7" r="2.5" fill="#e8d8b8"/><circle cx="1278.8" cy="425.3" r="1.5" fill="#e0c8a0"/><circle cx="1284.9" cy="437.4" r="2.1" fill="#7a8850"/><circle cx="1279.1" cy="394.1" r="1.8" fill="#e8d8b8"/><circle cx="1260.3" cy="437.6" r="1.5" fill="#8a3a30"/><circle cx="1265.2" cy="427.3" r="1.9" fill="#5a3a2a"/><circle cx="1266.3" cy="415.9" r="1.6" fill="#a83038"/><circle cx="1273.6" cy="421.3" r="1.8" fill="#8a3a30"/><circle cx="1300.2" cy="436.2" r="2.0" fill="#e8d8b8"/><circle cx="1273.4" cy="413.8" r="1.9" fill="#7a8850"/><circle cx="1261.7" cy="419.3" r="2.2" fill="#8a3a30"/><circle cx="1297.4" cy="440.4" r="1.8" fill="#5a3a2a"/><circle cx="1292.8" cy="424.5" r="1.8" fill="#a83038"/><circle cx="1276.2" cy="452.1" r="2.2" fill="#c8a878"/><circle cx="1289.7" cy="434.8" r="2.0" fill="#c8a878"/><circle cx="1269.8" cy="400.4" r="2.2" fill="#e8d8b8"/><circle cx="1248.0" cy="407.9" r="2.8" fill="#7a8850"/><circle cx="1272.2" cy="425.0" r="1.5" fill="#5a3a2a"/><circle cx="1285.3" cy="454.8" r="1.5" fill="#e0c8a0"/><circle cx="1271.9" cy="431.5" r="1.6" fill="#7a8850"/><circle cx="1280.7" cy="422.1" r="1.5" fill="#e8d8b8"/><circle cx="1257.3" cy="422.0" r="2.7" fill="#e8d8b8"/><circle cx="1283.3" cy="451.2" r="2.3" fill="#8a3a30"/><circle cx="1268.0" cy="427.8" r="2.3" fill="#e0c8a0"/><circle cx="1299.1" cy="421.5" r="1.7" fill="#5a3a2a"/><circle cx="1275.1" cy="455.0" r="2.2" fill="#e0c8a0"/><circle cx="1264.4" cy="445.6" r="1.7" fill="#a83038"/><circle cx="1283.7" cy="390.1" r="1.7" fill="#e0c8a0"/><circle cx="1294.9" cy="444.3" r="2.3" fill="#5a3a2a"/><circle cx="1284.2" cy="403.7" r="1.6" fill="#e0c8a0"/><circle cx="1276.1" cy="410.7" r="2.6" fill="#5a3a2a"/><circle cx="1272.0" cy="432.1" r="2.0" fill="#e8d8b8"/><circle cx="1271.5" cy="452.9" r="2.3" fill="#e0c8a0"/><circle cx="1265.8" cy="437.4" r="1.9" fill="#8a3a30"/><circle cx="1276.3" cy="390.5" r="2.3" fill="#e8d8b8"/><circle cx="1279.4" cy="409.9" r="2.4" fill="#c8a878"/><circle cx="1272.4" cy="391.8" r="1.8" fill="#e0c8a0"/><circle cx="1265.0" cy="409.6" r="1.6" fill="#7a8850"/><circle cx="1284.5" cy="425.7" r="1.7" fill="#e0c8a0"/><circle cx="1280.1" cy="439.0" r="2.2" fill="#a83038"/><circle cx="1272.0" cy="419.6" r="1.5" fill="#7a8850"/><circle cx="1258.2" cy="422.0" r="2.6" fill="#7a8850"/><circle cx="1262.1" cy="397.7" r="1.9" fill="#e0c8a0"/><circle cx="1242.4" cy="449.1" r="1.8" fill="#7a8850"/><circle cx="1277.6" cy="468.0" r="1.5" fill="#e0c8a0"/><circle cx="1225.5" cy="457.3" r="2.8" fill="#8a3a30"/><circle cx="1237.0" cy="453.2" r="1.6" fill="#a83038"/><circle cx="1219.6" cy="463.6" r="1.5" fill="#8a3a30"/><circle cx="1253.4" cy="463.5" r="1.6" fill="#7a8850"/><circle cx="1270.3" cy="455.2" r="1.4" fill="#5a3a2a"/><circle cx="1216.6" cy="466.8" r="1.7" fill="#5a3a2a"/><circle cx="1281.4" cy="470.4" r="2.5" fill="#8a3a30"/><circle cx="1242.1" cy="468.3" r="2.7" fill="#a83038"/><circle cx="1223.8" cy="475.6" r="2.6" fill="#e8d8b8"/><circle cx="1221.1" cy="469.1" r="1.8" fill="#5a3a2a"/><circle cx="1233.6" cy="475.3" r="2.5" fill="#e8d8b8"/><circle cx="1265.6" cy="476.5" r="2.3" fill="#8a3a30"/><circle cx="1273.2" cy="482.9" r="1.6" fill="#e0c8a0"/><circle cx="1264.5" cy="485.4" r="1.9" fill="#7a8850"/><circle cx="1262.0" cy="473.2" r="2.6" fill="#5a3a2a"/><circle cx="1257.9" cy="488.1" r="1.6" fill="#c8a878"/><circle cx="1252.6" cy="451.8" r="2.5" fill="#e8d8b8"/><circle cx="1218.1" cy="467.6" r="1.8" fill="#5a3a2a"/><circle cx="1283.0" cy="469.3" r="1.8" fill="#e8d8b8"/><circle cx="1234.1" cy="459.7" r="2.4" fill="#a83038"/><circle cx="1254.6" cy="459.2" r="1.9" fill="#7a8850"/><circle cx="1239.4" cy="457.0" r="2.8" fill="#e8d8b8"/><circle cx="1216.9" cy="459.4" r="2.7" fill="#8a3a30"/><circle cx="1247.1" cy="476.5" r="2.6" fill="#e8d8b8"/><circle cx="1245.7" cy="459.8" r="2.0" fill="#5a3a2a"/><circle cx="1263.9" cy="481.9" r="2.2" fill="#7a8850"/><circle cx="1223.4" cy="474.8" r="2.8" fill="#a83038"/><circle cx="1222.8" cy="467.2" r="2.4" fill="#c8a878"/><circle cx="1246.1" cy="454.4" r="2.4" fill="#7a8850"/><circle cx="1263.3" cy="464.6" r="2.3" fill="#5a3a2a"/><circle cx="1244.9" cy="480.3" r="2.4" fill="#7a8850"/><circle cx="1244.5" cy="480.7" r="2.7" fill="#e0c8a0"/><circle cx="1263.3" cy="451.1" r="1.7" fill="#e0c8a0"/><circle cx="1253.7" cy="483.0" r="1.6" fill="#5a3a2a"/><circle cx="1222.9" cy="467.4" r="2.6" fill="#5a3a2a"/><circle cx="1280.6" cy="468.2" r="2.3" fill="#5a3a2a"/><circle cx="1276.9" cy="474.9" r="2.2" fill="#8a3a30"/><circle cx="1218.1" cy="464.0" r="1.9" fill="#c8a878"/><circle cx="1268.5" cy="476.7" r="2.1" fill="#e0c8a0"/><circle cx="1243.4" cy="481.1" r="2.1" fill="#7a8850"/><circle cx="1227.3" cy="454.5" r="2.2" fill="#5a3a2a"/><circle cx="1256.3" cy="476.5" r="2.8" fill="#8a3a30"/><circle cx="1269.2" cy="454.1" r="2.3" fill="#c8a878"/><circle cx="1272.3" cy="467.6" r="2.7" fill="#c8a878"/><circle cx="1279.2" cy="480.5" r="2.6" fill="#e0c8a0"/><circle cx="1245.8" cy="450.2" r="2.3" fill="#a83038"/><circle cx="1245.6" cy="470.0" r="1.5" fill="#a83038"/><circle cx="1269.1" cy="469.1" r="1.8" fill="#5a3a2a"/><circle cx="1238.9" cy="482.8" r="2.4" fill="#e0c8a0"/><circle cx="1277.5" cy="472.2" r="1.6" fill="#a83038"/><circle cx="1266.1" cy="473.5" r="1.6" fill="#5a3a2a"/><circle cx="1245.4" cy="471.5" r="1.5" fill="#e0c8a0"/><circle cx="1240.8" cy="451.9" r="2.5" fill="#e0c8a0"/><circle cx="1250.4" cy="487.4" r="1.9" fill="#c8a878"/><circle cx="1276.4" cy="484.5" r="1.7" fill="#e0c8a0"/><circle cx="1251.0" cy="460.3" r="2.0" fill="#8a3a30"/><circle cx="1263.1" cy="453.0" r="2.7" fill="#c8a878"/><circle cx="1259.6" cy="462.4" r="2.4" fill="#8a3a30"/><circle cx="1229.1" cy="478.3" r="2.1" fill="#7a8850"/><circle cx="1277.6" cy="462.7" r="2.2" fill="#5a3a2a"/><circle cx="1275.9" cy="476.4" r="1.8" fill="#a83038"/><circle cx="1239.0" cy="462.8" r="2.4" fill="#e8d8b8"/><circle cx="1252.5" cy="457.5" r="1.7" fill="#c8a878"/><circle cx="1248.7" cy="473.6" r="1.9" fill="#5a3a2a"/><circle cx="1259.3" cy="459.4" r="1.5" fill="#7a8850"/><circle cx="1256.2" cy="473.7" r="2.5" fill="#7a8850"/><circle cx="1268.8" cy="482.8" r="2.0" fill="#a83038"/><circle cx="1261.4" cy="464.9" r="2.0" fill="#5a3a2a"/><circle cx="1225.0" cy="453.5" r="2.1" fill="#7a8850"/><circle cx="1272.5" cy="484.1" r="2.3" fill="#8a3a30"/><circle cx="1233.7" cy="472.5" r="1.5" fill="#c8a878"/><circle cx="1239.7" cy="450.0" r="2.5" fill="#5a3a2a"/><circle cx="1255.6" cy="474.5" r="2.4" fill="#e8d8b8"/><circle cx="1251.3" cy="473.5" r="2.1" fill="#8a3a30"/><circle cx="1270.3" cy="460.4" r="2.6" fill="#5a3a2a"/><circle cx="1261.1" cy="487.9" r="2.5" fill="#c8a878"/><circle cx="1273.1" cy="464.2" r="2.1" fill="#a83038"/><circle cx="1257.7" cy="481.7" r="1.9" fill="#a83038"/><circle cx="1216.0" cy="458.7" r="1.5" fill="#e8d8b8"/><circle cx="1260.7" cy="450.2" r="2.0" fill="#7a8850"/><circle cx="1250.4" cy="460.7" r="2.1" fill="#c8a878"/><circle cx="1236.3" cy="484.8" r="1.9" fill="#8a3a30"/><circle cx="1275.6" cy="475.5" r="1.6" fill="#8a3a30"/><circle cx="1261.4" cy="456.9" r="2.3" fill="#7a8850"/><circle cx="1221.7" cy="459.4" r="1.6" fill="#5a3a2a"/><circle cx="1252.8" cy="484.6" r="2.7" fill="#8a3a30"/><circle cx="1249.9" cy="449.1" r="1.6" fill="#5a3a2a"/><circle cx="1264.4" cy="456.6" r="2.1" fill="#c8a878"/><circle cx="1270.0" cy="481.5" r="2.7" fill="#7a8850"/><circle cx="1252.9" cy="480.2" r="2.6" fill="#e0c8a0"/><circle cx="1270.9" cy="481.6" r="2.6" fill="#8a3a30"/><circle cx="1236.9" cy="463.2" r="2.1" fill="#7a8850"/><circle cx="1254.4" cy="474.0" r="2.3" fill="#e0c8a0"/><circle cx="1272.4" cy="484.3" r="1.4" fill="#7a8850"/><circle cx="1238.6" cy="482.4" r="1.7" fill="#5a3a2a"/><circle cx="1231.6" cy="475.7" r="2.2" fill="#e8d8b8"/><circle cx="1228.6" cy="457.3" r="2.3" fill="#c8a878"/><circle cx="1249.0" cy="458.0" r="2.3" fill="#e0c8a0"/><circle cx="1252.7" cy="472.4" r="2.2" fill="#7a8850"/><circle cx="1243.8" cy="453.1" r="2.6" fill="#c8a878"/><circle cx="1225.4" cy="474.1" r="2.5" fill="#7a8850"/><circle cx="1232.0" cy="449.4" r="1.6" fill="#a83038"/><circle cx="1232.3" cy="479.0" r="2.2" fill="#5a3a2a"/><circle cx="1245.8" cy="465.5" r="2.1" fill="#5a3a2a"/><circle cx="1270.8" cy="471.9" r="2.7" fill="#5a3a2a"/><circle cx="1225.3" cy="464.7" r="2.2" fill="#e0c8a0"/><circle cx="1250.8" cy="484.2" r="2.3" fill="#a83038"/><circle cx="1237.9" cy="460.5" r="1.8" fill="#a83038"/><circle cx="1306.8" cy="439.9" r="2.0" fill="#8a6060"/><circle cx="1317.8" cy="442.9" r="2.2" fill="#a88080"/><circle cx="1315.8" cy="415.3" r="1.9" fill="#a88080"/><circle cx="1350.2" cy="409.2" r="1.8" fill="#8a6060"/><circle cx="1307.1" cy="408.8" r="1.7" fill="#9a7070"/><circle cx="1354.5" cy="394.7" r="1.7" fill="#d8c0b8"/><circle cx="1307.8" cy="432.0" r="1.7" fill="#a88080"/><circle cx="1335.6" cy="389.1" r="1.6" fill="#8a6060"/><circle cx="1354.6" cy="416.9" r="1.4" fill="#d8c0b8"/><circle cx="1307.6" cy="404.6" r="2.2" fill="#8a6060"/><circle cx="1331.0" cy="425.0" r="2.2" fill="#8a6060"/><circle cx="1329.4" cy="428.7" r="1.8" fill="#9a7070"/><circle cx="1337.5" cy="414.5" r="1.8" fill="#a88080"/><circle cx="1324.5" cy="424.3" r="1.8" fill="#8a6060"/><circle cx="1351.5" cy="397.6" r="1.6" fill="#d8c0b8"/><circle cx="1341.1" cy="443.7" r="1.3" fill="#a88080"/><circle cx="1331.4" cy="427.1" r="1.3" fill="#a88080"/><circle cx="1328.7" cy="451.7" r="2.1" fill="#a88080"/><circle cx="1325.0" cy="445.1" r="1.9" fill="#f0e8e8"/><circle cx="1360.2" cy="443.1" r="2.1" fill="#d8c0b8"/><circle cx="1356.5" cy="426.3" r="2.5" fill="#a88080"/><circle cx="1356.3" cy="451.1" r="1.9" fill="#9a7070"/><circle cx="1333.4" cy="415.0" r="2.4" fill="#c8a8a0"/><circle cx="1360.4" cy="406.6" r="2.4" fill="#d8c0b8"/><circle cx="1310.2" cy="435.7" r="2.3" fill="#d8c0b8"/><circle cx="1349.9" cy="455.3" r="2.2" fill="#8a6060"/><circle cx="1364.5" cy="417.7" r="1.9" fill="#a88080"/><circle cx="1340.7" cy="441.1" r="1.4" fill="#d8c0b8"/><circle cx="1333.7" cy="412.1" r="1.4" fill="#d8c0b8"/><circle cx="1331.5" cy="406.9" r="2.1" fill="#a88080"/><circle cx="1314.7" cy="415.8" r="1.9" fill="#9a7070"/><circle cx="1330.9" cy="432.7" r="2.4" fill="#f0e8e8"/><circle cx="1317.6" cy="404.6" r="1.9" fill="#f0e8e8"/><circle cx="1333.9" cy="441.3" r="2.1" fill="#8a6060"/><circle cx="1349.8" cy="452.3" r="1.4" fill="#c8a8a0"/><circle cx="1338.1" cy="420.6" r="1.6" fill="#f0e8e8"/><circle cx="1340.2" cy="395.2" r="1.7" fill="#9a7070"/><circle cx="1341.6" cy="441.0" r="2.2" fill="#c8a8a0"/><circle cx="1316.5" cy="403.1" r="2.5" fill="#a88080"/><circle cx="1357.3" cy="450.7" r="2.0" fill="#a88080"/><circle cx="1328.2" cy="426.0" r="2.2" fill="#a88080"/><circle cx="1331.6" cy="439.0" r="2.1" fill="#f0e8e8"/><circle cx="1330.8" cy="389.7" r="2.5" fill="#d8c0b8"/><circle cx="1349.3" cy="449.2" r="1.9" fill="#c8a8a0"/><circle cx="1312.6" cy="420.4" r="2.3" fill="#f0e8e8"/><circle cx="1328.5" cy="404.6" r="1.6" fill="#c8a8a0"/><circle cx="1340.8" cy="395.7" r="2.3" fill="#f0e8e8"/><circle cx="1358.5" cy="433.7" r="2.2" fill="#9a7070"/><circle cx="1343.9" cy="412.9" r="2.5" fill="#f0e8e8"/><circle cx="1338.2" cy="389.2" r="1.9" fill="#d8c0b8"/><circle cx="1332.4" cy="386.2" r="2.0" fill="#f0e8e8"/><circle cx="1313.9" cy="452.0" r="1.7" fill="#a88080"/><circle cx="1341.0" cy="453.2" r="2.2" fill="#c8a8a0"/><circle cx="1332.6" cy="456.8" r="1.8" fill="#a88080"/><circle cx="1338.5" cy="458.4" r="1.4" fill="#9a7070"/><circle cx="1328.3" cy="407.0" r="2.1" fill="#a88080"/><circle cx="1339.8" cy="444.5" r="2.2" fill="#a88080"/><circle cx="1341.3" cy="418.8" r="2.3" fill="#8a6060"/><circle cx="1342.8" cy="439.7" r="2.0" fill="#8a6060"/><circle cx="1322.3" cy="456.6" r="1.6" fill="#d8c0b8"/><circle cx="1113.6" cy="438.3" r="2.3" fill="#2a1a18"/><circle cx="1083.5" cy="419.5" r="1.9" fill="#5a2a30"/><circle cx="1112.8" cy="441.9" r="1.7" fill="#5a2a30"/><circle cx="1093.4" cy="415.6" r="2.4" fill="#5a2a30"/><circle cx="1097.8" cy="428.1" r="2.0" fill="#2a1a18"/><circle cx="1102.6" cy="424.1" r="2.6" fill="#8a3a38"/><circle cx="1111.1" cy="441.0" r="1.6" fill="#3a2a28"/><circle cx="1090.2" cy="420.6" r="2.2" fill="#2a1a18"/><circle cx="1105.4" cy="423.3" r="2.3" fill="#2a1a18"/><circle cx="1118.0" cy="432.3" r="2.2" fill="#3a2a28"/><circle cx="1099.1" cy="430.1" r="2.3" fill="#5a2a30"/><circle cx="1108.7" cy="434.0" r="1.6" fill="#5a2a30"/><circle cx="1113.2" cy="434.7" r="2.0" fill="#3a2a28"/><circle cx="1100.1" cy="423.1" r="2.2" fill="#3a2a28"/><circle cx="1115.9" cy="441.1" r="1.7" fill="#5a2a30"/><circle cx="1110.0" cy="428.5" r="2.4" fill="#5a2a30"/><circle cx="1096.2" cy="429.4" r="1.9" fill="#2a1a18"/><circle cx="1109.8" cy="427.4" r="1.7" fill="#8a3a38"/><circle cx="1097.5" cy="419.8" r="1.6" fill="#3a2a28"/><circle cx="1107.9" cy="419.8" r="1.8" fill="#3a2a28"/><circle cx="1110.1" cy="428.7" r="2.0" fill="#2a1a18"/><circle cx="1094.5" cy="415.6" r="1.6" fill="#3a2a28"/><circle cx="1085.2" cy="427.0" r="2.0" fill="#2a1a18"/><circle cx="1095.0" cy="418.9" r="2.0" fill="#8a3a38"/><circle cx="1079.5" cy="425.8" r="2.5" fill="#3a2a28"/><circle cx="1093.0" cy="416.3" r="1.9" fill="#5a2a30"/><circle cx="1092.7" cy="417.1" r="2.6" fill="#3a2a28"/><circle cx="1117.1" cy="437.5" r="1.7" fill="#2a1a18"/><circle cx="1117.2" cy="427.8" r="1.8" fill="#3a2a28"/><circle cx="1085.8" cy="435.4" r="1.8" fill="#2a1a18"/><circle cx="1105.7" cy="418.8" r="2.0" fill="#2a1a18"/><circle cx="1101.1" cy="419.2" r="2.2" fill="#2a1a18"/><circle cx="1079.0" cy="424.0" r="2.1" fill="#8a3a38"/><circle cx="1116.7" cy="441.9" r="1.8" fill="#5a2a30"/><circle cx="1101.9" cy="426.0" r="2.5" fill="#3a2a28"/><circle cx="1080.2" cy="426.7" r="2.1" fill="#8a3a38"/><circle cx="1082.4" cy="422.1" r="2.2" fill="#3a2a28"/><circle cx="1089.6" cy="425.4" r="1.9" fill="#8a3a38"/><circle cx="1178.6" cy="472.2" r="1.5" fill="#1c1410"/><circle cx="1153.9" cy="455.1" r="2.2" fill="#3a2a22"/><circle cx="1156.4" cy="447.3" r="1.7" fill="#5a4030"/><circle cx="1191.1" cy="466.1" r="1.7" fill="#5a4030"/><circle cx="1229.6" cy="463.5" r="2.0" fill="#4a3428"/><circle cx="1174.5" cy="449.2" r="2.0" fill="#5a4030"/><circle cx="1183.9" cy="474.5" r="1.8" fill="#5a4030"/><circle cx="1172.2" cy="448.3" r="2.3" fill="#1c1410"/><circle cx="1170.6" cy="458.3" r="2.6" fill="#3a2a22"/><circle cx="1193.1" cy="452.6" r="2.1" fill="#2a1c18"/><circle cx="1214.9" cy="468.1" r="1.7" fill="#2a1c18"/><circle cx="1224.5" cy="470.0" r="2.0" fill="#2a1c18"/><circle cx="1199.4" cy="473.9" r="2.2" fill="#2a1c18"/><circle cx="1154.9" cy="452.8" r="2.2" fill="#2a1c18"/><circle cx="1152.6" cy="461.5" r="2.2" fill="#5a4030"/><circle cx="1197.6" cy="454.2" r="1.8" fill="#3a2a22"/><circle cx="1197.1" cy="468.2" r="2.2" fill="#2a1c18"/><circle cx="1149.2" cy="458.3" r="1.6" fill="#2a1c18"/><circle cx="1196.3" cy="461.1" r="2.5" fill="#4a3428"/><circle cx="1189.1" cy="453.4" r="2.0" fill="#2a1c18"/><circle cx="1217.0" cy="480.0" r="1.7" fill="#2a1c18"/><circle cx="1176.7" cy="453.9" r="1.7" fill="#4a3428"/><circle cx="1228.0" cy="479.3" r="1.8" fill="#3a2a22"/><circle cx="1197.7" cy="457.2" r="1.7" fill="#4a3428"/><circle cx="1229.0" cy="468.0" r="2.5" fill="#3a2a22"/><circle cx="1215.6" cy="471.2" r="1.8" fill="#2a1c18"/><circle cx="1149.4" cy="459.1" r="1.7" fill="#5a4030"/><circle cx="1169.1" cy="452.4" r="2.5" fill="#4a3428"/><circle cx="1196.9" cy="476.5" r="2.2" fill="#3a2a22"/><circle cx="1204.2" cy="454.2" r="2.2" fill="#1c1410"/><circle cx="1164.5" cy="459.3" r="2.5" fill="#4a3428"/><circle cx="1207.8" cy="459.3" r="1.6" fill="#4a3428"/><circle cx="1223.1" cy="472.2" r="2.1" fill="#3a2a22"/><circle cx="1156.2" cy="461.3" r="2.2" fill="#1c1410"/><circle cx="1154.1" cy="450.6" r="2.5" fill="#1c1410"/><circle cx="1144.5" cy="446.8" r="2.5" fill="#5a4030"/><circle cx="1156.8" cy="461.5" r="1.6" fill="#4a3428"/><circle cx="1205.2" cy="475.5" r="1.5" fill="#2a1c18"/><circle cx="1157.4" cy="459.5" r="2.1" fill="#3a2a22"/><circle cx="1216.5" cy="477.3" r="2.0" fill="#4a3428"/><circle cx="1170.5" cy="455.7" r="2.3" fill="#4a3428"/><circle cx="1171.3" cy="445.4" r="2.5" fill="#1c1410"/><circle cx="1200.9" cy="466.3" r="2.3" fill="#1c1410"/><circle cx="1169.6" cy="464.1" r="2.0" fill="#3a2a22"/><circle cx="1236.6" cy="474.4" r="2.6" fill="#3a2a22"/><circle cx="1213.3" cy="473.5" r="1.6" fill="#5a3a2a"/><circle cx="1246.1" cy="487.3" r="2.2" fill="#8a3a30"/><circle cx="1237.3" cy="489.1" r="2.2" fill="#5a3a2a"/><circle cx="1252.9" cy="484.0" r="1.6" fill="#e8d8b8"/><circle cx="1246.0" cy="468.3" r="2.0" fill="#e8d8b8"/><circle cx="1240.1" cy="470.5" r="2.1" fill="#5a3a2a"/><circle cx="1211.2" cy="483.8" r="1.7" fill="#7a8850"/><circle cx="1238.9" cy="493.9" r="1.6" fill="#8a3a30"/><circle cx="1236.0" cy="480.7" r="1.7" fill="#c8a878"/><circle cx="1230.7" cy="472.3" r="2.4" fill="#7a8850"/><circle cx="1243.2" cy="479.8" r="2.1" fill="#8a3a30"/><circle cx="1245.4" cy="478.8" r="1.7" fill="#7a8850"/><circle cx="1255.2" cy="478.2" r="2.1" fill="#7a8850"/><circle cx="1203.5" cy="477.8" r="2.0" fill="#5a3a2a"/><circle cx="1239.8" cy="478.3" r="1.7" fill="#a83038"/><circle cx="1233.4" cy="481.7" r="1.8" fill="#7a8850"/><circle cx="1250.2" cy="485.6" r="2.5" fill="#a83038"/><circle cx="1244.5" cy="476.1" r="1.8" fill="#e8d8b8"/><circle cx="1278.4" cy="486.7" r="2.6" fill="#7a8850"/><circle cx="1269.5" cy="478.5" r="2.5" fill="#c8a878"/><circle cx="1232.0" cy="476.4" r="1.7" fill="#7a8850"/><circle cx="1236.2" cy="471.8" r="1.7" fill="#a83038"/><circle cx="1266.2" cy="478.2" r="1.5" fill="#a83038"/><circle cx="1234.7" cy="492.2" r="1.9" fill="#e8d8b8"/><circle cx="1205.7" cy="468.7" r="2.0" fill="#7a8850"/><circle cx="1249.9" cy="491.8" r="2.1" fill="#e0c8a0"/><circle cx="1254.9" cy="475.2" r="1.9" fill="#c8a878"/><circle cx="1257.8" cy="480.7" r="2.0" fill="#a83038"/><circle cx="1216.4" cy="475.6" r="2.4" fill="#5a3a2a"/><circle cx="1251.1" cy="469.3" r="1.9" fill="#c8a878"/><circle cx="1256.1" cy="475.1" r="2.3" fill="#7a8850"/><circle cx="1219.5" cy="487.2" r="1.5" fill="#a83038"/><circle cx="1279.3" cy="485.7" r="2.1" fill="#a83038"/><circle cx="1219.2" cy="483.2" r="2.6" fill="#8a3a30"/><circle cx="1244.8" cy="472.2" r="1.8" fill="#8a3a30"/><circle cx="1247.8" cy="476.5" r="2.0" fill="#8a3a30"/><circle cx="1235.5" cy="480.3" r="2.3" fill="#8a3a30"/><circle cx="1234.3" cy="479.8" r="1.5" fill="#8a3a30"/><circle cx="1242.1" cy="471.4" r="2.1" fill="#5a3a2a"/><circle cx="1272.0" cy="492.3" r="2.2" fill="#5a3a2a"/><circle cx="1355.0" cy="409.4" r="1.8" fill="#8a3a38"/><circle cx="1334.7" cy="431.8" r="1.7" fill="#e0c8a0"/><circle cx="1329.7" cy="412.0" r="1.8" fill="#e0c8a0"/><circle cx="1324.3" cy="398.3" r="2.2" fill="#5a3a2a"/><circle cx="1340.7" cy="381.8" r="2.1" fill="#5a3a2a"/><circle cx="1329.9" cy="411.7" r="2.1" fill="#e0c8a0"/><circle cx="1341.1" cy="399.5" r="2.1" fill="#e0c8a0"/><circle cx="1339.6" cy="390.2" r="1.7" fill="#e0c8a0"/><circle cx="1316.4" cy="398.4" r="2.0" fill="#8a3a38"/><circle cx="1334.1" cy="437.6" r="2.1" fill="#c04048"/><circle cx="1353.1" cy="423.0" r="1.4" fill="#e0c8a0"/><circle cx="1355.6" cy="431.4" r="1.6" fill="#8a3a38"/><circle cx="1356.8" cy="418.3" r="1.9" fill="#c04048"/><circle cx="1324.5" cy="431.6" r="1.7" fill="#e0c8a0"/><circle cx="1337.8" cy="420.9" r="2.0" fill="#e0c8a0"/><circle cx="1335.0" cy="437.4" r="1.9" fill="#c04048"/><circle cx="1355.2" cy="425.2" r="2.0" fill="#c04048"/><circle cx="1344.8" cy="375.5" r="1.7" fill="#c04048"/><circle cx="1342.8" cy="418.6" r="1.8" fill="#c04048"/><circle cx="1338.2" cy="410.5" r="1.5" fill="#8a3a38"/><circle cx="1355.0" cy="434.7" r="2.1" fill="#e0c8a0"/><circle cx="1337.1" cy="405.7" r="2.1" fill="#5a3a2a"/><circle cx="1323.7" cy="391.5" r="1.6" fill="#e0c8a0"/><circle cx="1327.6" cy="408.1" r="2.4" fill="#c04048"/><circle cx="1316.3" cy="424.5" r="2.2" fill="#c04048"/><circle cx="1315.8" cy="393.9" r="2.3" fill="#c04048"/><circle cx="1354.3" cy="388.0" r="1.7" fill="#5a3a2a"/><circle cx="1349.2" cy="444.4" r="1.9" fill="#8a3a38"/><circle cx="1367.1" cy="418.1" r="2.1" fill="#e0c8a0"/><circle cx="1338.9" cy="400.4" r="1.5" fill="#c04048"/><circle cx="1341.2" cy="429.9" r="1.5" fill="#5a3a2a"/><circle cx="1350.0" cy="373.7" r="2.3" fill="#e0c8a0"/><circle cx="1324.8" cy="439.5" r="1.9" fill="#c04048"/><circle cx="1359.9" cy="414.1" r="1.7" fill="#e0c8a0"/><circle cx="1342.9" cy="403.5" r="2.1" fill="#c04048"/><circle cx="1341.4" cy="429.0" r="1.8" fill="#c04048"/><circle cx="1346.1" cy="422.7" r="1.7" fill="#5a3a2a"/><circle cx="1353.7" cy="426.7" r="1.6" fill="#e0c8a0"/><circle cx="1350.3" cy="384.3" r="2.1" fill="#c04048"/><circle cx="1328.9" cy="399.5" r="1.6" fill="#5a3a2a"/><circle cx="1029" cy="377" r="2.6" fill="#2a2020"/><circle cx="1042" cy="396" r="2.6" fill="#2a2020"/>
<circle cx="1058" cy="392" r="2.4" fill="#5a2a2a"/><circle cx="1059" cy="410" r="2.5" fill="#3a2a28"/><circle cx="1071" cy="410" r="2.5" fill="#3a2a28"/>
<circle cx="1124" cy="452" r="2.5" fill="#c04048"/><circle cx="1134" cy="458" r="2.5" fill="#a03038"/><circle cx="1144" cy="455" r="2.5" fill="#c04048"/>
<circle cx="1148" cy="477" r="2.5" fill="#2a2020"/><circle cx="1158" cy="455" r="2.5" fill="#2a2020"/><circle cx="1170" cy="459" r="2.5" fill="#2a2020"/><circle cx="1182" cy="463" r="2.5" fill="#2a2020"/>
<circle cx="1169" cy="496" r="2.5" fill="#2a2020"/><circle cx="1192" cy="482" r="2.5" fill="#3a2a28"/><circle cx="1262" cy="488" r="3" fill="#c03040"/>
<circle cx="1303" cy="486" r="3" fill="#b8a888"/><circle cx="1325" cy="482" r="2.5" fill="#3a2a28"/>
</g>
<!-- glass rims -->
<g fill="none" stroke="#fafafa" stroke-width="3.5" opacity="0.85">
<ellipse cx="1055" cy="287" rx="38" ry="50" transform="rotate(-20 1055 287)"/>
<ellipse cx="1131" cy="328" rx="39" ry="50" transform="rotate(-18 1131 328)"/>
<ellipse cx="1209" cy="369" rx="33" ry="46" transform="rotate(-15 1209 369)"/>
<ellipse cx="1275" cy="418" rx="36" ry="48" transform="rotate(-15 1275 418)"/>
</g>
<g fill="none" stroke="#a0a0a0" stroke-width="1.2" opacity="0.55">
<ellipse cx="1055" cy="287" rx="35" ry="47" transform="rotate(-20 1055 287)"/>
<ellipse cx="1131" cy="328" rx="36" ry="47" transform="rotate(-18 1131 328)"/>
<ellipse cx="1209" cy="369" rx="30" ry="43" transform="rotate(-15 1209 369)"/>
<ellipse cx="1275" cy="418" rx="33" ry="45" transform="rotate(-15 1275 418)"/>
</g>
</svg>
<div class="a" style="left:32px;top:875px;width:110px;height:61px;background:#1b1b1b;border-radius:9px;"></div>
<div class="a" style="left:114px;top:876.5px;width:26px;height:57px;background:#2c2c2c;border-radius:7px;"></div>
<svg class="a" style="left:75px;top:877px;" width="22" height="32" viewBox="0 0 22 32"><rect x="6.5" y="2" width="10" height="18" rx="5" fill="none" stroke="#f0f0f0" stroke-width="1.7"/><path d="M2.5 14 Q2.5 24.5 11.5 24.5 Q20.5 24.5 20.5 14" fill="none" stroke="#f0f0f0" stroke-width="1.7"/><path d="M11.5 24.5 V30 M6 30 H17" stroke="#f0f0f0" stroke-width="1.7"/></svg>
<div class="a t" style="left:66px;top:917.03px;font-size:14.5px;line-height:14.5px;color:#e8e8e8;font-weight:700;font-family:'Liberation Sans',sans-serif;">Audio</div>
<svg class="a" style="left:186px;top:878px;" width="34" height="30" viewBox="0 0 34 30"><rect x="2" y="8" width="20" height="15" rx="3" fill="none" stroke="#f0f0f0" stroke-width="1.7"/><path d="M22 13 L30 8 V23 L22 18" fill="none" stroke="#f0f0f0" stroke-width="1.7" stroke-linejoin="round"/><path d="M13 18 L30 2" stroke="#e8185a" stroke-width="2.4" stroke-linecap="round"/></svg>
<div class="a t" style="left:183.5px;top:916.94px;font-size:14.6px;line-height:14.6px;color:#e8e8e8;font-weight:700;font-family:'Liberation Sans',sans-serif;">Video</div>
<svg class="a" style="left:244px;top:890px;" width="10" height="6" viewBox="0 0 10 6"><path d="M1 5 L5 1 L9 5" fill="none" stroke="#ddd" stroke-width="1.6"/></svg>
<div class="a" style="left:85px;top:891.5px;width:301px;height:25px;background:#fbfbfb;border-radius:1px;border:1px solid #d8d8d8"></div>
<div class="a t" style="left:90.6px;top:897.95px;font-size:14px;line-height:14px;color:#5f5f5f;font-weight:400;font-family:'Liberation Sans',sans-serif;letter-spacing:0.52px">Noise removal is on. Mute my audio (Alt+A)</div>
<svg class="a" style="left:570px;top:882px;" width="27" height="26" viewBox="0 0 27 26"><circle cx="8.6" cy="5.2" r="2.9" fill="none" stroke="#f0f0f0" stroke-width="1.6"/><path d="M10 11.5 H7 Q2.5 11.5 2.5 16.5 V19.5 Q2.5 22.5 5.5 22.5 H12" fill="none" stroke="#f0f0f0" stroke-width="1.6"/><circle cx="18.2" cy="9.3" r="2.9" fill="none" stroke="#f0f0f0" stroke-width="1.6"/><rect x="12.2" y="16.4" width="12" height="6.4" rx="3.2" fill="none" stroke="#f0f0f0" stroke-width="1.6"/></svg>
<div class="a t" style="left:604.5px;top:886.35px;font-size:14px;line-height:14px;color:#a8a8a8;font-weight:400;font-family:'Liberation Sans',sans-serif;">29</div>
<svg class="a" style="left:644.8px;top:891px;" width="11" height="7" viewBox="0 0 11 7"><path d="M1.2 5.8 L5.5 1.5 L9.8 5.8" fill="none" stroke="#eee" stroke-width="1.7" stroke-linejoin="round"/></svg>
<div class="a t" style="left:543px;top:917.55px;font-size:14px;line-height:14px;color:#e8e8e8;font-weight:700;font-family:'Liberation Sans',sans-serif;">Participants</div>
<svg class="a" style="left:704px;top:878px;" width="32" height="32" viewBox="0 0 32 32"><path d="M9 5.5 Q11 2.8 16 2.8 H24 Q29.8 2.8 29.8 8.5 V13.5 Q29.8 17 27.5 18" fill="none" stroke="#f0f0f0" stroke-width="1.6"/><path d="M8 9.5 H19 Q24.5 9.5 24.5 15 V20.5 Q24.5 26 19 26 H14 L10.5 29 L10 26 Q3 25.5 3 20 V15 Q3 9.5 8 9.5 Z" fill="none" stroke="#f0f0f0" stroke-width="1.6" stroke-linejoin="round"/><circle cx="9" cy="17.8" r="1.3" fill="#f0f0f0"/><circle cx="13.8" cy="17.8" r="1.3" fill="#f0f0f0"/><circle cx="18.6" cy="17.8" r="1.3" fill="#f0f0f0"/></svg>
<svg class="a" style="left:757.5px;top:891px;" width="11" height="7" viewBox="0 0 11 7"><path d="M1.2 5.8 L5.5 1.5 L9.8 5.8" fill="none" stroke="#eee" stroke-width="1.7" stroke-linejoin="round"/></svg>
<div class="a t" style="left:706px;top:917.55px;font-size:14px;line-height:14px;color:#e8e8e8;font-weight:700;font-family:'Liberation Sans',sans-serif;">Chat</div>
<svg class="a" style="left:808.8px;top:879px;" width="34" height="32" viewBox="0 0 34 32"><path transform="rotate(20 16.5 16) scale(1.04 1)" d="M16.5 9.5 C13.5 3.2, 3.8 3.2, 3.8 11 C3.8 18, 11.5 23, 16.5 28.5 C21.5 23, 29.2 18, 29.2 11 C29.2 3.2, 19.5 3.2, 16.5 9.5 Z" fill="none" stroke="#f0f0f0" stroke-width="1.7" stroke-linejoin="round"/></svg>
<svg class="a" style="left:857.5px;top:891px;" width="11" height="7" viewBox="0 0 11 7"><path d="M1.2 5.8 L5.5 1.5 L9.8 5.8" fill="none" stroke="#eee" stroke-width="1.7" stroke-linejoin="round"/></svg>
<div class="a t" style="left:808.8px;top:918.06px;font-size:13.4px;line-height:13.4px;color:#e8e8e8;font-weight:700;font-family:'Liberation Sans',sans-serif;">React</div>
<div class="a" style="left:923.3px;top:881.8px;width:30px;height:25px;background:#1fe68d;border-radius:4px;"></div>
<svg class="a" style="left:923px;top:882px;" width="30" height="25" viewBox="0 0 30 25"><path d="M15 20 V9" stroke="#000" stroke-width="3.2" stroke-linecap="round"/><path d="M9 13.5 L15 7 L21 13.5" fill="none" stroke="#000" stroke-width="3.6" stroke-linecap="round" stroke-linejoin="round"/></svg>
<div class="a t" style="left:919px;top:917.72px;font-size:13.8px;line-height:13.8px;color:#e8e8e8;font-weight:700;font-family:'Liberation Sans',sans-serif;">Share</div>
<svg class="a" style="left:1045px;top:878px;" width="32" height="32" viewBox="0 0 32 32"><circle cx="15.7" cy="15.7" r="14.2" fill="none" stroke="#f0f0f0" stroke-width="1.7"/><circle cx="15.7" cy="9" r="1.6" fill="#f0f0f0"/><path d="M13 13.5 H16.3 V22.5 M12.5 22.5 H19.5" fill="none" stroke="#f0f0f0" stroke-width="1.8"/></svg>
<div class="a t" style="left:1017px;top:916.62px;font-size:15.1px;line-height:15.1px;color:#e8e8e8;font-weight:700;font-family:'Liberation Sans',sans-serif;">Meeting info</div>
<svg class="a" style="left:1160px;top:878px;" width="32" height="32" viewBox="0 0 32 32"><circle cx="15.7" cy="15.7" r="14.2" fill="none" stroke="#f0f0f0" stroke-width="1.7"/><circle cx="9.5" cy="15.7" r="1.7" fill="#f0f0f0"/><circle cx="15.7" cy="15.7" r="1.7" fill="#f0f0f0"/><circle cx="21.9" cy="15.7" r="1.7" fill="#f0f0f0"/></svg>
<div class="a t" style="left:1157.5px;top:916.53px;font-size:15.2px;line-height:15.2px;color:#e8e8e8;font-weight:700;font-family:'Liberation Sans',sans-serif;">More</div>
<svg class="a" style="left:1502px;top:877px;" width="34" height="33" viewBox="0 0 34 33"><path d="M13.5 5.5 L30 3.5 V26 L23 30" fill="none" stroke="#e8185a" stroke-width="1.8" stroke-linejoin="round"/><path d="M23.5 7.5 L30 3.5 M23.5 7.5 V30.5" fill="none" stroke="#e8185a" stroke-width="1.8"/><circle cx="12.2" cy="10" r="3" fill="none" stroke="#f4f4f4" stroke-width="1.7"/><path d="M9.5 14.5 Q5 15 3.5 20 L6 21 Q7.5 18 9.5 18 L7 24 L3.5 30 L7 31.5 L11 25 L13.5 31.5 L17 30.5 L14.5 22.5 L15.5 18.5 L18 21.5 L19.5 20 Q16.5 14 12.5 14 Z" fill="none" stroke="#f4f4f4" stroke-width="1.6" stroke-linejoin="round"/></svg>
<div class="a t" style="left:1498.7px;top:917.89px;font-size:13.6px;line-height:13.6px;color:#e8e8e8;font-weight:700;font-family:'Liberation Sans',sans-serif;">Leave</div>
<div class="a" style="left:0px;top:938px;width:1600px;height:62px;background:linear-gradient(#8a8a8a,#cdcdcd 3px,#d9d9d9 5px,#d9d9d9);border-radius:0px;"></div>
<svg class="a" style="left:24px;top:948px;" width="40" height="38" viewBox="0 0 40 38"><defs><radialGradient id="sun" cx="0.4" cy="0.35" r="0.7"><stop offset="0" stop-color="#ffb830"/><stop offset="1" stop-color="#f06a10"/></radialGradient></defs><circle cx="16" cy="22.5" r="12.5" fill="url(#sun)"/><rect x="11" y="1.5" width="25" height="19" rx="9.5" fill="#f8f8f8"/></svg>
<div class="a t" style="left:43.5px;top:951.92px;font-size:12.5px;line-height:12.5px;color:#222;font-weight:400;font-family:'Liberation Sans',sans-serif;">5°</div>
<svg class="a" style="left:275px;top:956px;" width="29" height="29" viewBox="0 0 29 29"><defs><linearGradient id="wl" x1="0" y1="0" x2="1" y2="1"><stop offset="0" stop-color="#3ec4f8"/><stop offset="1" stop-color="#0a78d8"/></linearGradient></defs><rect x="0" y="0" width="13.6" height="13.6" rx="1" fill="url(#wl)"/><rect x="15.4" y="0" width="13.6" height="13.6" rx="1" fill="url(#wl)"/><rect x="0" y="15.4" width="13.6" height="13.6" rx="1" fill="url(#wl)"/><rect x="15.4" y="15.4" width="13.6" height="13.6" rx="1" fill="url(#wl)"/></svg>
<svg class="a" style="left:331px;top:956px;" width="30" height="30" viewBox="0 0 30 30"><circle cx="12" cy="12" r="9" fill="none" stroke="#1a1a1a" stroke-width="2.6"/><path d="M18.5 18.5 L27 27" stroke="#1a1a1a" stroke-width="2.8" stroke-linecap="round"/></svg>
<svg class="a" style="left:385px;top:955px;" width="31" height="31" viewBox="0 0 31 31"><rect x="11" y="1" width="19" height="19" rx="2" fill="#f6f6f6"/><rect x="11" y="1" width="19" height="19" rx="2" fill="none" stroke="#e0e0e0"/><rect x="1" y="11" width="19" height="19" rx="2" fill="#2a2a2a"/><rect x="11" y="11" width="9" height="9" fill="#bdbdbd"/></svg>
<svg class="a" style="left:441px;top:956px;" width="29" height="29" viewBox="0 0 29 29"><rect width="29" height="29" rx="6" fill="#15101e"/><rect x="6" y="6" width="4" height="17" fill="#b060f0"/><rect x="19" y="6" width="4" height="17" fill="#b060f0"/><circle cx="14.5" cy="14.5" r="4.2" fill="#b060f0"/></svg>
<svg class="a" style="left:496px;top:955px;" width="30" height="30" viewBox="0 0 30 30"><circle cx="15" cy="15" r="15" fill="#0a1490"/><text x="15" y="22.5" text-anchor="middle" font-family="Liberation Serif" font-style="italic" font-weight="700" font-size="22" fill="#28d0f0">s</text></svg>
<svg class="a" style="left:549px;top:953px;" width="33" height="33" viewBox="0 0 33 33"><defs><linearGradient id="cp" x1="0" y1="0" x2="1" y2="1"><stop offset="0" stop-color="#60d8f8"/><stop offset="1" stop-color="#1070d0"/></linearGradient></defs><path d="M8 6 Q10 2 16 3 L24 3 Q30 3 30 10 L30 22 Q30 28 24 28 L8 28 Q2 28 2 22 L2 12 Q2 6 8 6 Z" fill="url(#cp)"/><path d="M16 8 L18 14 L24 16 L18 18 L16 24 L14 18 L8 16 L14 14 Z" fill="#e8f8ff"/><rect x="13" y="21" width="19" height="10" rx="2" fill="#f8d020"/><text x="22.5" y="29.5" text-anchor="middle" font-family="Liberation Sans" font-weight="700" font-size="8" fill="#222">PRE</text></svg>
<svg class="a" style="left:604px;top:954px;" width="32" height="32" viewBox="0 0 32 32"><g transform="translate(16 16)"><path d="M-3 -15 H3 L4 -11 L8 -9 L12 -11 L15 -6 L12 -3 V3 L15 6 L12 11 L8 9 L4 11 L3 15 H-3 L-4 11 L-8 9 L-12 11 L-15 6 L-12 3 V-3 L-15 -6 L-12 -11 L-8 -9 L-4 -11 Z" fill="#6e7076"/><circle r="8" fill="#e6e6e6"/><circle r="6" fill="#1e64c8"/></g></svg>
<svg class="a" style="left:660px;top:954px;" width="32" height="32" viewBox="0 0 32 32"><circle cx="16" cy="16" r="15.5" fill="#db4437"/><path d="M16 16 L2.6 23.75 A15.5 15.5 0 0 0 24 29.3 Z" fill="#0f9d58"/><path d="M16 16 L24 29.3 A15.5 15.5 0 0 0 29.4 8.25 L16 8.25 Z" fill="#f4b400"/><circle cx="16" cy="16" r="7" fill="#fff"/><circle cx="16" cy="16" r="5.5" fill="#4285f4"/></svg>
<div class="a" style="left:672px;top:990px;width:9px;height:3.5px;background:#7a7a7a;border-radius:2px;"></div>
<svg class="a" style="left:714px;top:954px;" width="32" height="32" viewBox="0 0 32 32"><defs><linearGradient id="ol" x1="0" y1="0" x2="1" y2="1"><stop offset="0" stop-color="#50c0f8"/><stop offset="1" stop-color="#0a60c0"/></linearGradient></defs><path d="M10 6 L22 2 L31 8 L31 26 L10 26 Z" fill="url(#ol)"/><path d="M12 14 L31 14 L31 28 Q31 30 29 30 L12 30 Z" fill="#1a8ae0"/><rect x="1" y="10" width="15" height="15" rx="2" fill="#0a5ab8"/><circle cx="8.5" cy="17.5" r="4" fill="none" stroke="#fff" stroke-width="2"/></svg>
<svg class="a" style="left:770px;top:955px;" width="30" height="32" viewBox="0 0 30 32"><path d="M15 2 Q27 2 28 13 Q28 24 16 25 L11 29 L11 24.5 Q2 22 2 13 Q3 2 15 2 Z" fill="#8a6ae0"/><path d="M9 9 Q10 7 12 8 L13.5 11 Q13 12.5 12 13 Q13.5 16.5 17 18 Q17.5 17 19 16.5 L22 18 Q23 20 21 21 Q16 22 11.5 17 Q8 13 9 9 Z" fill="#fff"/></svg>
<svg class="a" style="left:787px;top:949px;" width="21" height="20" viewBox="0 0 21 20"><circle cx="10.5" cy="10" r="9.5" fill="#e8303a"/></svg>
<div class="a t" style="left:788.5px;top:954.61px;font-size:10.5px;line-height:10.5px;color:#fff;font-weight:400;font-family:'Liberation Sans',sans-serif;letter-spacing:-0.3px">127</div>
<div class="a" style="left:782px;top:990px;width:9px;height:3.5px;background:#7a7a7a;border-radius:2px;"></div>
<svg class="a" style="left:826px;top:955px;" width="30" height="30" viewBox="0 0 30 30"><circle cx="15" cy="15" r="14" fill="#2c9fd8"/><path d="M6.5 14.5 L22 8.5 Q23.5 8 23 10 L20.5 21.5 Q20 23 18.5 22 L14 18.5 L12 20.5 L12.5 16.5 L19 10.5 L11 15.5 L7 14.5 Z" fill="#fff"/></svg>
<svg class="a" style="left:880px;top:954px;" width="32" height="32" viewBox="0 0 32 32"><circle cx="16" cy="16" r="15.5" fill="#1060e8"/><text x="16" y="19" text-anchor="middle" font-family="Liberation Sans" font-weight="700" font-size="8.6" fill="#fff">zoom</text></svg>
<div class="a" style="left:892px;top:990px;width:9px;height:3.5px;background:#7a7a7a;border-radius:2px;"></div>
<svg class="a" style="left:934px;top:954px;" width="32" height="32" viewBox="0 0 32 32"><defs><linearGradient id="pp" x1="0" y1="0" x2="1" y2="1"><stop offset="0" stop-color="#f08060"/><stop offset="1" stop-color="#c02838"/></linearGradient></defs><circle cx="17" cy="15" r="14" fill="url(#pp)"/><path d="M17 1 A14 14 0 0 1 31 15 L17 15 Z" fill="#f8a070"/><rect x="1" y="12" width="15" height="16" rx="2" fill="#b01828"/><text x="8.5" y="25" text-anchor="middle" font-family="Liberation Sans" font-weight="700" font-size="12" fill="#fff">P</text></svg>
<svg class="a" style="left:989px;top:954px;" width="32" height="32" viewBox="0 0 32 32"><path d="M1 6 Q1 4 3 4 L12 4 L15 7 L29 7 Q31 7 31 9 L31 27 Q31 29 29 29 L3 29 Q1 29 1 27 Z" fill="#e8b020"/><rect x="1" y="11" width="30" height="18" rx="2" fill="#f8d048"/><rect x="9" y="20" width="14" height="5" rx="1" fill="#2a78d0"/></svg>
<svg class="a" style="left:1044px;top:954px;" width="31" height="32" viewBox="0 0 31 32"><defs><linearGradient id="wd" x1="0" y1="0" x2="0" y2="1"><stop offset="0" stop-color="#58b8f8"/><stop offset="1" stop-color="#1850b8"/></linearGradient></defs><rect x="8" y="2" width="22" height="27" rx="2" fill="url(#wd)"/><rect x="1" y="11" width="15" height="15" rx="2" fill="#1040a0"/><text x="8.5" y="23" text-anchor="middle" font-family="Liberation Sans" font-weight="700" font-size="11" fill="#fff">W</text></svg>
<svg class="a" style="left:1098px;top:954px;" width="31" height="32" viewBox="0 0 31 32"><defs><linearGradient id="xl" x1="0" y1="0" x2="0" y2="1"><stop offset="0" stop-color="#70d878"/><stop offset="1" stop-color="#107838"/></linearGradient></defs><rect x="8" y="2" width="22" height="27" rx="2" fill="url(#xl)"/><rect x="1" y="11" width="15" height="15" rx="2" fill="#0a6a30"/><text x="8.5" y="23" text-anchor="middle" font-family="Liberation Sans" font-weight="700" font-size="11" fill="#fff">X</text></svg>
<svg class="a" style="left:1228px;top:964px;" width="16" height="11" viewBox="0 0 16 11"><path d="M2 9 L8 3 L14 9" fill="none" stroke="#222" stroke-width="1.6"/></svg>
<svg class="a" style="left:1265px;top:960px;" width="24" height="22" viewBox="0 0 24 22"><path d="M5 16 Q1 16 1 12 Q1 8 5 8 Q6 3 11 3 Q16 3 17 8 Q20 8 21 11 L21 16 Z" fill="#d0d0d0" stroke="#2a2a2a" stroke-width="1.5"/><circle cx="17" cy="16.5" r="5.2" fill="#1a6ed8"/><rect x="16.3" y="15" width="1.4" height="4" fill="#fff"/><circle cx="17" cy="13.4" r="0.8" fill="#fff"/></svg>
<svg class="a" style="left:1307px;top:959px;" width="18" height="22" viewBox="0 0 18 22"><rect x="5" y="1.5" width="7" height="12" rx="3.5" fill="none" stroke="#2a5ad0" stroke-width="1.6"/><path d="M2 9.5 Q2 16 8.5 16 Q15 16 15 9.5 M8.5 16 V20" fill="none" stroke="#2a5ad0" stroke-width="1.6"/></svg>
<div class="a t" style="left:1350px;top:964.15px;font-size:14px;line-height:14px;color:#222;font-weight:400;font-family:'Liberation Sans',sans-serif;">УКР</div>
<svg class="a" style="left:1399px;top:962px;" width="24" height="17" viewBox="0 0 24 17"><path d="M1.5 6 Q11.5 -2 21.5 6 M4.5 9 Q11.5 3 18.5 9 M7.5 12 Q11.5 8.5 15.5 12" fill="none" stroke="#222" stroke-width="1.6" stroke-linecap="round"/><circle cx="11.5" cy="14.5" r="1.6" fill="#222"/></svg>
<svg class="a" style="left:1429px;top:961px;" width="23" height="18" viewBox="0 0 23 18"><path d="M2 6 H6 L11 2 V16 L6 12 H2 Z" fill="none" stroke="#222" stroke-width="1.5" stroke-linejoin="round"/><path d="M14 6 Q16 9 14 12 M16.5 4 Q20 9 16.5 14 M19 2 Q23.5 9 19 16" fill="none" stroke="#222" stroke-width="1.4"/></svg>
<svg class="a" style="left:1459px;top:959px;" width="30" height="19" viewBox="0 0 30 19"><rect x="1.5" y="5.5" width="25" height="11" rx="2.5" fill="none" stroke="#222" stroke-width="1.8"/><rect x="26.5" y="8.5" width="2.2" height="5" fill="#222"/><rect x="3.5" y="7.5" width="21" height="7" fill="#222"/><path d="M14 2 V9 M11 2.5 V5 M17 2.5 V5" stroke="#222" stroke-width="1.5"/><path d="M11 9 L14 13 L17 9" fill="#d9d9d9"/></svg>
<div class="a t" style="left:1480px;top:953px;width:96px;text-align:right;font-size:14.5px;line-height:15px;color:#1e1e1e">1:33 PM</div>
<div class="a t" style="left:1480px;top:972px;width:96px;text-align:right;font-size:15.3px;line-height:15px;color:#1e1e1e">2/27/2026</div>
</body></html>
